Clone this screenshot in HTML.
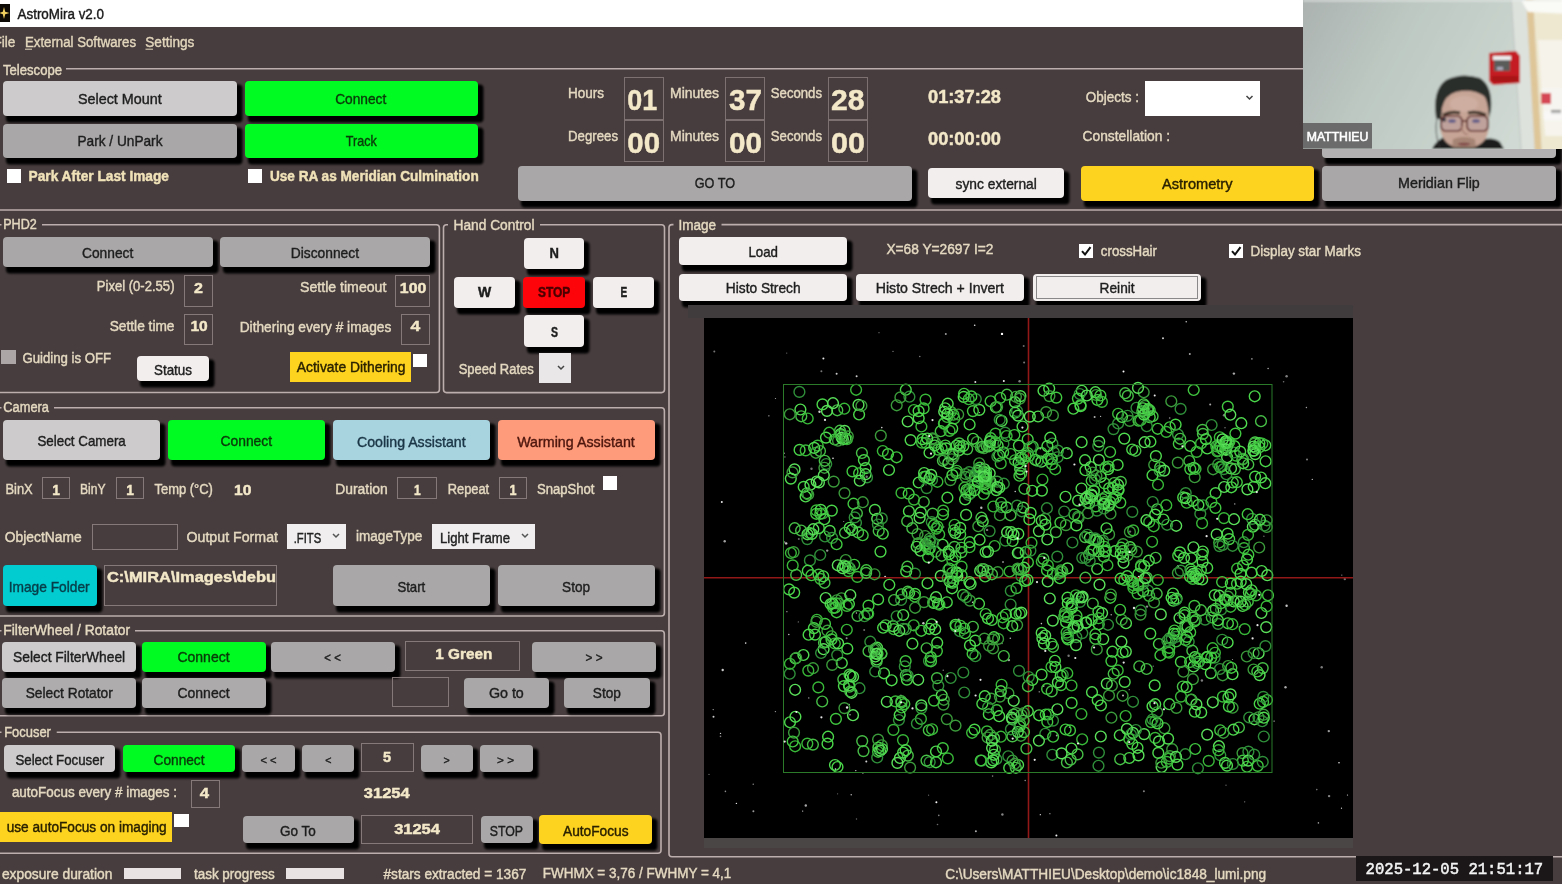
<!DOCTYPE html>
<html><head><meta charset="utf-8"><title>AstroMira v2.0</title>
<style>
html,body{margin:0;padding:0;background:#473d3e;overflow:hidden;}
svg{display:block;font-family:"Liberation Sans",sans-serif;will-change:transform;}
</style></head><body>
<svg width="1562" height="884" viewBox="0 0 1562 884">
<defs>
<filter id="sh" x="-10%" y="-30%" width="120%" height="160%"><feGaussianBlur stdDeviation="1.3"/></filter>
<linearGradient id="wall" gradientUnits="userSpaceOnUse" x1="1303" y1="0" x2="1520" y2="120"><stop offset="0" stop-color="#abb2b0"/><stop offset="0.4" stop-color="#bdc8c2"/><stop offset="0.8" stop-color="#c9d3cd"/><stop offset="1" stop-color="#d0d9d3"/></linearGradient>
<filter id="glow" x="-2%" y="-2%" width="104%" height="104%"><feGaussianBlur stdDeviation="0.45"/></filter>
<filter id="camblur" x="-5%" y="-5%" width="110%" height="110%"><feGaussianBlur stdDeviation="1.0"/></filter>
</defs>
<rect x="0" y="0" width="1562" height="884" fill="#473d3e"/>
<rect x="0" y="0" width="1303" height="27" fill="#ffffff" rx="0" />
<rect x="0" y="4" width="10" height="18" fill="#0d0a05" rx="0" />
<path d="M4,7 L5.2,11.8 L9.5,13 L5.2,14.2 L4,19 L2.8,14.2 L-1,13 L2.8,11.8 Z" fill="#f2d060"/>
<text x="17.50" y="19.30" font-size="14" fill="#1a1a1a" stroke="#1a1a1a" stroke-width="0.4" textLength="86.50" lengthAdjust="spacingAndGlyphs" >AstroMira v2.0</text>
<text x="-6.50" y="47.00" font-size="13.8" fill="#e2d6bc" stroke="#e2d6bc" stroke-width="0.4" textLength="21.90" lengthAdjust="spacingAndGlyphs" >File</text>
<text x="25.00" y="47.00" font-size="13.8" fill="#e2d6bc" stroke="#e2d6bc" stroke-width="0.4" textLength="111.00" lengthAdjust="spacingAndGlyphs" >External Softwares</text>
<text x="145.30" y="47.00" font-size="13.8" fill="#e2d6bc" stroke="#e2d6bc" stroke-width="0.4" textLength="49.10" lengthAdjust="spacingAndGlyphs" >Settings</text>
<line x1="25" y1="49.2" x2="32" y2="49.2" stroke="#e2d6bc" stroke-width="1"/>
<line x1="145.5" y1="49.2" x2="153" y2="49.2" stroke="#e2d6bc" stroke-width="1"/>
<text x="3.00" y="75.00" font-size="13.8" fill="#e4d9c0" stroke="#e4d9c0" stroke-width="0.4" textLength="59.00" lengthAdjust="spacingAndGlyphs" >Telescope</text>
<line x1="66" y1="68.8" x2="1562" y2="68.8" stroke="#bcaeac" stroke-width="1.6"/>
<line x1="-2" y1="210" x2="1562" y2="210" stroke="#bcaeac" stroke-width="1.6"/>
<rect x="6" y="84.5" width="236.5" height="38" rx="4" fill="#000" opacity="1" filter="url(#sh)"/>
<rect x="3" y="81" width="234" height="35" fill="#cdcbcb" rx="4" />
<text x="78.00" y="104.20" font-size="14.5" fill="#1e1e1e" stroke="#1e1e1e" stroke-width="0.4" textLength="83.71" lengthAdjust="spacingAndGlyphs" >Select Mount</text>
<rect x="6" y="127.5" width="236.5" height="37" rx="4" fill="#000" opacity="1" filter="url(#sh)"/>
<rect x="3" y="124" width="234" height="34" fill="#a9a7a7" rx="4" />
<text x="77.50" y="146.30" font-size="14.5" fill="#1e1e1e" stroke="#1e1e1e" stroke-width="0.4" textLength="84.97" lengthAdjust="spacingAndGlyphs" >Park / UnPark</text>
<rect x="248" y="84.5" width="235.5" height="38" rx="4" fill="#000" opacity="1" filter="url(#sh)"/>
<rect x="245" y="81" width="233" height="35" fill="#00fb22" rx="4" />
<text x="335.20" y="103.80" font-size="14.5" fill="#0a3a0a" stroke="#0a3a0a" stroke-width="0.4" textLength="51.09" lengthAdjust="spacingAndGlyphs" >Connect</text>
<rect x="248" y="127.5" width="235.5" height="37" rx="4" fill="#000" opacity="1" filter="url(#sh)"/>
<rect x="245" y="124" width="233" height="34" fill="#00fb22" rx="4" />
<text x="345.80" y="145.80" font-size="14.5" fill="#0a3a0a" stroke="#0a3a0a" stroke-width="0.4" textLength="30.87" lengthAdjust="spacingAndGlyphs" >Track</text>
<rect x="7" y="169" width="14" height="14" fill="#ffffff" rx="0" />
<text x="28.60" y="181.30" font-size="14.5" font-weight="bold" fill="#f0e2b8" stroke="#f0e2b8" stroke-width="0.45" textLength="140.40" lengthAdjust="spacingAndGlyphs" >Park After Last Image</text>
<rect x="248" y="169" width="14" height="14" fill="#ffffff" rx="0" />
<text x="270.00" y="181.30" font-size="14.5" font-weight="bold" fill="#f0e2b8" stroke="#f0e2b8" stroke-width="0.45" textLength="208.69" lengthAdjust="spacingAndGlyphs" >Use RA as Meridian Culmination</text>
<text x="568.00" y="98.30" font-size="14.5" fill="#e4d9c0" stroke="#e4d9c0" stroke-width="0.4" textLength="35.99" lengthAdjust="spacingAndGlyphs" >Hours</text>
<text x="568.00" y="140.80" font-size="14.5" fill="#e4d9c0" stroke="#e4d9c0" stroke-width="0.4" textLength="50.00" lengthAdjust="spacingAndGlyphs" >Degrees</text>
<text x="670.00" y="98.30" font-size="14.5" fill="#e4d9c0" stroke="#e4d9c0" stroke-width="0.4" textLength="49.01" lengthAdjust="spacingAndGlyphs" >Minutes</text>
<text x="670.00" y="140.80" font-size="14.5" fill="#e4d9c0" stroke="#e4d9c0" stroke-width="0.4" textLength="49.01" lengthAdjust="spacingAndGlyphs" >Minutes</text>
<text x="770.80" y="98.30" font-size="14.5" fill="#e4d9c0" stroke="#e4d9c0" stroke-width="0.4" textLength="51.20" lengthAdjust="spacingAndGlyphs" >Seconds</text>
<text x="770.80" y="140.80" font-size="14.5" fill="#e4d9c0" stroke="#e4d9c0" stroke-width="0.4" textLength="51.20" lengthAdjust="spacingAndGlyphs" >Seconds</text>
<rect x="624.5" y="77.5" width="39" height="42" fill="none" stroke="#7d7172" stroke-width="1"/>
<rect x="624.5" y="120.5" width="39" height="41" fill="none" stroke="#7d7172" stroke-width="1"/>
<rect x="725.5" y="77.5" width="39" height="42" fill="none" stroke="#7d7172" stroke-width="1"/>
<rect x="725.5" y="120.5" width="39" height="41" fill="none" stroke="#7d7172" stroke-width="1"/>
<rect x="828.5" y="77.5" width="39" height="42" fill="none" stroke="#7d7172" stroke-width="1"/>
<rect x="828.5" y="120.5" width="39" height="41" fill="none" stroke="#7d7172" stroke-width="1"/>
<text x="627.30" y="109.70" font-size="30" font-weight="bold" fill="#f3e8c8" stroke="#f3e8c8" stroke-width="0.45" textLength="29.91" lengthAdjust="spacingAndGlyphs" >01</text>
<text x="627.30" y="152.50" font-size="30" font-weight="bold" fill="#f3e8c8" stroke="#f3e8c8" stroke-width="0.45" textLength="32.71" lengthAdjust="spacingAndGlyphs" >00</text>
<text x="729.00" y="109.70" font-size="30" font-weight="bold" fill="#f3e8c8" stroke="#f3e8c8" stroke-width="0.45" textLength="33.01" lengthAdjust="spacingAndGlyphs" >37</text>
<text x="729.00" y="152.50" font-size="30" font-weight="bold" fill="#f3e8c8" stroke="#f3e8c8" stroke-width="0.45" textLength="33.01" lengthAdjust="spacingAndGlyphs" >00</text>
<text x="831.00" y="109.70" font-size="30" font-weight="bold" fill="#f3e8c8" stroke="#f3e8c8" stroke-width="0.45" textLength="33.51" lengthAdjust="spacingAndGlyphs" >28</text>
<text x="831.00" y="152.50" font-size="30" font-weight="bold" fill="#f3e8c8" stroke="#f3e8c8" stroke-width="0.45" textLength="34.01" lengthAdjust="spacingAndGlyphs" >00</text>
<text x="928.00" y="102.50" font-size="18" font-weight="bold" fill="#f3e8c8" stroke="#f3e8c8" stroke-width="0.45" textLength="73.00" lengthAdjust="spacingAndGlyphs" >01:37:28</text>
<text x="928.00" y="145.30" font-size="18" font-weight="bold" fill="#f3e8c8" stroke="#f3e8c8" stroke-width="0.45" textLength="73.00" lengthAdjust="spacingAndGlyphs" >00:00:00</text>
<text x="1085.80" y="101.70" font-size="14.5" fill="#e4d9c0" stroke="#e4d9c0" stroke-width="0.4" textLength="53.20" lengthAdjust="spacingAndGlyphs" >Objects :</text>
<text x="1082.50" y="140.80" font-size="14.5" fill="#e4d9c0" stroke="#e4d9c0" stroke-width="0.4" textLength="87.50" lengthAdjust="spacingAndGlyphs" >Constellation :</text>
<rect x="1145" y="81" width="115" height="35" fill="#ffffff" rx="0" />
<path d="M1246.5,96.0 L1249.5,99.0 L1252.5,96.0" fill="none" stroke="#444" stroke-width="1.5"/>
<rect x="521" y="169.5" width="396.5" height="38" rx="4" fill="#000" opacity="1" filter="url(#sh)"/>
<rect x="518" y="166" width="394" height="35" fill="#a9a7a7" rx="4" />
<text x="694.70" y="188.00" font-size="14.5" fill="#1e1e1e" stroke="#1e1e1e" stroke-width="0.4" textLength="40.30" lengthAdjust="spacingAndGlyphs" >GO TO</text>
<rect x="931" y="171.5" width="138.5" height="33" rx="4" fill="#000" opacity="1" filter="url(#sh)"/>
<rect x="928" y="168" width="136" height="30" fill="#f2eeed" rx="4" />
<text x="955.60" y="188.50" font-size="14.5" fill="#1e1e1e" stroke="#1e1e1e" stroke-width="0.4" textLength="81.19" lengthAdjust="spacingAndGlyphs" >sync external</text>
<rect x="1084" y="169.5" width="235.5" height="38" rx="4" fill="#000" opacity="1" filter="url(#sh)"/>
<rect x="1081" y="166" width="233" height="35" fill="#fdd31f" rx="4" />
<text x="1162.00" y="188.50" font-size="14.5" fill="#2a2100" stroke="#2a2100" stroke-width="0.4" textLength="70.50" lengthAdjust="spacingAndGlyphs" >Astrometry</text>
<rect x="1325" y="169.5" width="236.5" height="38" rx="4" fill="#000" opacity="1" filter="url(#sh)"/>
<rect x="1322" y="166" width="234" height="35" fill="#a9a7a7" rx="4" />
<text x="1398.10" y="188.30" font-size="14.5" fill="#1e1e1e" stroke="#1e1e1e" stroke-width="0.4" textLength="81.70" lengthAdjust="spacingAndGlyphs" >Meridian Flip</text>
<rect x="1325" y="127.5" width="236.5" height="37" rx="4" fill="#000" opacity="1" filter="url(#sh)"/>
<rect x="1322" y="124" width="234" height="34" fill="#b3b1b1" rx="4" />
<text x="3.20" y="229.40" font-size="13.8" fill="#e4d9c0" stroke="#e4d9c0" stroke-width="0.4" textLength="33.59" lengthAdjust="spacingAndGlyphs" >PHD2</text>
<path d="M42,224.7 H436.4 Q439.4,224.7 439.4,227.7 V389.5 Q439.4,392.5 436.4,392.5 H0 Q-3,392.5 -3,389.5 V227.7 Q-3,224.7 0,224.7 H1.5" fill="none" stroke="#bcaeac" stroke-width="1.6"/>
<rect x="6" y="240.5" width="212.5" height="33" rx="4" fill="#000" opacity="1" filter="url(#sh)"/>
<rect x="3" y="237" width="210" height="30" fill="#a9a7a7" rx="4" />
<text x="82.00" y="258.30" font-size="14.5" fill="#1e1e1e" stroke="#1e1e1e" stroke-width="0.4" textLength="51.29" lengthAdjust="spacingAndGlyphs" >Connect</text>
<rect x="223" y="240.5" width="212.5" height="33" rx="4" fill="#000" opacity="1" filter="url(#sh)"/>
<rect x="220" y="237" width="210" height="30" fill="#a9a7a7" rx="4" />
<text x="290.70" y="258.40" font-size="14.5" fill="#1e1e1e" stroke="#1e1e1e" stroke-width="0.4" textLength="68.30" lengthAdjust="spacingAndGlyphs" >Disconnect</text>
<text x="96.80" y="291.40" font-size="14" fill="#e4d9c0" stroke="#e4d9c0" stroke-width="0.4" textLength="77.70" lengthAdjust="spacingAndGlyphs" >Pixel (0-2.55)</text>
<rect x="184.5" y="275.5" width="28" height="31" fill="none" stroke="#85797a" stroke-width="1"/>
<text x="194.10" y="292.50" font-size="15.5" font-weight="bold" fill="#f3e8c8" stroke="#f3e8c8" stroke-width="0.45" textLength="8.90" lengthAdjust="spacingAndGlyphs" >2</text>
<text x="300.00" y="291.90" font-size="14" fill="#e4d9c0" stroke="#e4d9c0" stroke-width="0.4" textLength="86.40" lengthAdjust="spacingAndGlyphs" >Settle timeout</text>
<rect x="395.5" y="275.5" width="34" height="31" fill="none" stroke="#85797a" stroke-width="1"/>
<text x="399.80" y="293.00" font-size="15.5" font-weight="bold" fill="#f3e8c8" stroke="#f3e8c8" stroke-width="0.45" textLength="26.51" lengthAdjust="spacingAndGlyphs" >100</text>
<text x="109.70" y="331.20" font-size="14" fill="#e4d9c0" stroke="#e4d9c0" stroke-width="0.4" textLength="64.80" lengthAdjust="spacingAndGlyphs" >Settle time</text>
<rect x="184.5" y="314.5" width="28" height="30" fill="none" stroke="#85797a" stroke-width="1"/>
<text x="190.40" y="331.20" font-size="15.5" font-weight="bold" fill="#f3e8c8" stroke="#f3e8c8" stroke-width="0.45" textLength="17.30" lengthAdjust="spacingAndGlyphs" >10</text>
<text x="239.70" y="331.50" font-size="14" fill="#e4d9c0" stroke="#e4d9c0" stroke-width="0.4" textLength="151.59" lengthAdjust="spacingAndGlyphs" >Dithering every # images</text>
<rect x="401.5" y="314.5" width="28" height="30" fill="none" stroke="#85797a" stroke-width="1"/>
<text x="410.50" y="331.20" font-size="15.5" font-weight="bold" fill="#f3e8c8" stroke="#f3e8c8" stroke-width="0.45" textLength="9.70" lengthAdjust="spacingAndGlyphs" >4</text>
<rect x="1" y="350" width="15" height="14" fill="#aca6a6" rx="0" />
<text x="22.40" y="362.60" font-size="14" fill="#e4d9c0" stroke="#e4d9c0" stroke-width="0.4" textLength="88.80" lengthAdjust="spacingAndGlyphs" >Guiding is OFF</text>
<rect x="140" y="359.5" width="74.5" height="28" rx="4" fill="#000" opacity="1" filter="url(#sh)"/>
<rect x="137" y="356" width="72" height="25" fill="#f2eeed" rx="4" />
<text x="154.00" y="374.80" font-size="14.5" fill="#1e1e1e" stroke="#1e1e1e" stroke-width="0.4" textLength="38.00" lengthAdjust="spacingAndGlyphs" >Status</text>
<rect x="290" y="352" width="121" height="30" fill="#fdd31f" rx="0" />
<text x="296.80" y="372.20" font-size="14" fill="#2a2100" stroke="#2a2100" stroke-width="0.4" textLength="108.70" lengthAdjust="spacingAndGlyphs" >Activate Dithering</text>
<rect x="413" y="354" width="14" height="13" fill="#ffffff" rx="0" />
<text x="453.50" y="229.70" font-size="13.8" fill="#e4d9c0" stroke="#e4d9c0" stroke-width="0.4" textLength="81.00" lengthAdjust="spacingAndGlyphs" >Hand Control</text>
<path d="M540,224.8 H661.5 Q664.5,224.8 664.5,227.8 V389.6 Q664.5,392.6 661.5,392.6 H446.5 Q443.5,392.6 443.5,389.6 V227.8 Q443.5,224.8 446.5,224.8 H448.0" fill="none" stroke="#bcaeac" stroke-width="1.6"/>
<rect x="527" y="241.5" width="62.5" height="34" rx="4" fill="#000" opacity="1" filter="url(#sh)"/>
<rect x="524" y="238" width="60" height="31" fill="#f2eeed" rx="4" />
<text x="549.40" y="258.40" font-size="14.5" font-weight="bold" fill="#1e1e1e" stroke="#1e1e1e" stroke-width="0.45" textLength="9.40" lengthAdjust="spacingAndGlyphs" >N</text>
<rect x="457" y="280.5" width="63.5" height="34" rx="4" fill="#000" opacity="1" filter="url(#sh)"/>
<rect x="454" y="277" width="61" height="31" fill="#f2eeed" rx="4" />
<text x="478.00" y="297.30" font-size="14.5" font-weight="bold" fill="#1e1e1e" stroke="#1e1e1e" stroke-width="0.45" textLength="13.20" lengthAdjust="spacingAndGlyphs" >W</text>
<rect x="526" y="280.5" width="64.5" height="34" rx="4" fill="#000" opacity="1" filter="url(#sh)"/>
<rect x="523" y="277" width="62" height="31" fill="#fc040a" rx="4" />
<text x="537.90" y="297.30" font-size="14.5" font-weight="bold" fill="#4a0000" stroke="#4a0000" stroke-width="0.45" textLength="32.40" lengthAdjust="spacingAndGlyphs" >STOP</text>
<rect x="596" y="280.5" width="63.5" height="34" rx="4" fill="#000" opacity="1" filter="url(#sh)"/>
<rect x="593" y="277" width="61" height="31" fill="#f2eeed" rx="4" />
<text x="620.50" y="297.30" font-size="14.5" font-weight="bold" fill="#1e1e1e" stroke="#1e1e1e" stroke-width="0.45" textLength="6.70" lengthAdjust="spacingAndGlyphs" >E</text>
<rect x="527" y="318.5" width="62.5" height="35" rx="4" fill="#000" opacity="1" filter="url(#sh)"/>
<rect x="524" y="315" width="60" height="32" fill="#f2eeed" rx="4" />
<text x="551.00" y="336.90" font-size="14.5" font-weight="bold" fill="#1e1e1e" stroke="#1e1e1e" stroke-width="0.45" textLength="7.00" lengthAdjust="spacingAndGlyphs" >S</text>
<text x="458.70" y="374.00" font-size="14" fill="#e4d9c0" stroke="#e4d9c0" stroke-width="0.4" textLength="75.00" lengthAdjust="spacingAndGlyphs" >Speed Rates</text>
<rect x="539" y="353" width="32" height="30" fill="#e9e7e7" rx="0" />
<path d="M558,366.0 L561,369.0 L564,366.0" fill="none" stroke="#444" stroke-width="1.5"/>
<text x="678.40" y="229.60" font-size="13.8" fill="#e4d9c0" stroke="#e4d9c0" stroke-width="0.4" textLength="37.60" lengthAdjust="spacingAndGlyphs" >Image</text>
<path d="M721.5,224.6 H1597 Q1600,224.6 1600,227.6 V853.8 Q1600,856.8 1597,856.8 H672 Q669,856.8 669,853.8 V227.6 Q669,224.6 672,224.6 H673.5" fill="none" stroke="#bcaeac" stroke-width="1.6"/>
<rect x="682" y="240.5" width="170.5" height="31" rx="4" fill="#000" opacity="1" filter="url(#sh)"/>
<rect x="679" y="237" width="168" height="28" fill="#f2eeed" rx="4" />
<text x="748.40" y="256.80" font-size="14.5" fill="#1e1e1e" stroke="#1e1e1e" stroke-width="0.4" textLength="29.60" lengthAdjust="spacingAndGlyphs" >Load</text>
<rect x="682" y="277.5" width="170.5" height="30" rx="4" fill="#000" opacity="1" filter="url(#sh)"/>
<rect x="679" y="274" width="168" height="27" fill="#f2eeed" rx="4" />
<text x="725.80" y="293.40" font-size="14.5" fill="#1e1e1e" stroke="#1e1e1e" stroke-width="0.4" textLength="74.80" lengthAdjust="spacingAndGlyphs" >Histo Strech</text>
<rect x="859" y="277.5" width="170.5" height="30" rx="4" fill="#000" opacity="1" filter="url(#sh)"/>
<rect x="856" y="274" width="168" height="27" fill="#f2eeed" rx="4" />
<text x="875.80" y="293.40" font-size="14.5" fill="#1e1e1e" stroke="#1e1e1e" stroke-width="0.4" textLength="128.20" lengthAdjust="spacingAndGlyphs" >Histo Strech + Invert</text>
<rect x="1036" y="277.5" width="170.5" height="30" rx="4" fill="#000" opacity="1" filter="url(#sh)"/>
<rect x="1033" y="274" width="168" height="27" fill="#f2eeed" rx="4" />
<text x="1099.60" y="293.40" font-size="14.5" fill="#1e1e1e" stroke="#1e1e1e" stroke-width="0.4" textLength="35.00" lengthAdjust="spacingAndGlyphs" >Reinit</text>
<rect x="1036.5" y="276.5" width="161" height="22" fill="none" stroke="#222" stroke-width="1" stroke-dasharray="1,1"/>
<text x="886.40" y="253.70" font-size="14" fill="#e4d9c0" stroke="#e4d9c0" stroke-width="0.4" textLength="107.01" lengthAdjust="spacingAndGlyphs" >X=68 Y=2697 I=2</text>
<rect x="1079" y="244" width="14" height="14" fill="#ffffff" rx="0" />
<path d="M1082,251.2 L1085,254.5 L1090.5,247.2" fill="none" stroke="#111" stroke-width="2"/>
<text x="1100.80" y="255.80" font-size="14" fill="#e4d9c0" stroke="#e4d9c0" stroke-width="0.4" textLength="56.20" lengthAdjust="spacingAndGlyphs" >crossHair</text>
<rect x="1229" y="244" width="14" height="14" fill="#ffffff" rx="0" />
<path d="M1232,251.2 L1235,254.5 L1240.5,247.2" fill="none" stroke="#111" stroke-width="2"/>
<text x="1250.60" y="255.60" font-size="14" fill="#e4d9c0" stroke="#e4d9c0" stroke-width="0.4" textLength="110.40" lengthAdjust="spacingAndGlyphs" >Display star Marks</text>
<rect x="688" y="305" width="665" height="13" fill="#403b3c" rx="0" />
<rect x="704" y="318" width="649" height="520" fill="#000000" rx="0" />
<rect x="704" y="838" width="649" height="10" fill="#4a4646" rx="0" />
<text x="3.30" y="412.00" font-size="13.8" fill="#e4d9c0" stroke="#e4d9c0" stroke-width="0.4" textLength="45.68" lengthAdjust="spacingAndGlyphs" >Camera</text>
<path d="M54,407.7 H661.4 Q664.4,407.7 664.4,410.7 V613 Q664.4,616 661.4,616 H0 Q-3,616 -3,613 V410.7 Q-3,407.7 0,407.7 H1.5" fill="none" stroke="#bcaeac" stroke-width="1.6"/>
<rect x="6" y="423.5" width="159.5" height="43" rx="4" fill="#000" opacity="1" filter="url(#sh)"/>
<rect x="3" y="420" width="157" height="40" fill="#cdcbcb" rx="4" />
<text x="37.40" y="446.20" font-size="14.5" fill="#1e1e1e" stroke="#1e1e1e" stroke-width="0.4" textLength="88.38" lengthAdjust="spacingAndGlyphs" >Select Camera</text>
<rect x="171" y="423.5" width="159.5" height="43" rx="4" fill="#000" opacity="1" filter="url(#sh)"/>
<rect x="168" y="420" width="157" height="40" fill="#00fb22" rx="4" />
<text x="220.50" y="446.20" font-size="14.5" fill="#0a3a0a" stroke="#0a3a0a" stroke-width="0.4" textLength="51.59" lengthAdjust="spacingAndGlyphs" >Connect</text>
<rect x="336" y="423.5" width="159.5" height="43" rx="4" fill="#000" opacity="1" filter="url(#sh)"/>
<rect x="333" y="420" width="157" height="40" fill="#a8d4e0" rx="4" />
<text x="357.00" y="446.50" font-size="14.5" fill="#1b3646" stroke="#1b3646" stroke-width="0.4" textLength="108.60" lengthAdjust="spacingAndGlyphs" >Cooling Assistant</text>
<rect x="501" y="423.5" width="159.5" height="43" rx="4" fill="#000" opacity="1" filter="url(#sh)"/>
<rect x="498" y="420" width="157" height="40" fill="#fe9b7b" rx="4" />
<text x="517.20" y="446.50" font-size="14.5" fill="#4e170e" stroke="#4e170e" stroke-width="0.4" textLength="117.60" lengthAdjust="spacingAndGlyphs" >Warming Assistant</text>
<text x="5.40" y="494.00" font-size="14" fill="#e4d9c0" stroke="#e4d9c0" stroke-width="0.4" textLength="27.30" lengthAdjust="spacingAndGlyphs" >BinX</text>
<rect x="42.5" y="477.5" width="27" height="21" fill="none" stroke="#85797a" stroke-width="1"/>
<text x="52.20" y="494.70" font-size="15" font-weight="bold" fill="#f3e8c8" stroke="#f3e8c8" stroke-width="0.45" textLength="7.70" lengthAdjust="spacingAndGlyphs" >1</text>
<text x="80.00" y="494.00" font-size="14" fill="#e4d9c0" stroke="#e4d9c0" stroke-width="0.4" textLength="25.60" lengthAdjust="spacingAndGlyphs" >BinY</text>
<rect x="116.5" y="477.5" width="27" height="21" fill="none" stroke="#85797a" stroke-width="1"/>
<text x="126.20" y="494.70" font-size="15" font-weight="bold" fill="#f3e8c8" stroke="#f3e8c8" stroke-width="0.45" textLength="7.70" lengthAdjust="spacingAndGlyphs" >1</text>
<text x="154.50" y="494.00" font-size="14" fill="#e4d9c0" stroke="#e4d9c0" stroke-width="0.4" textLength="58.40" lengthAdjust="spacingAndGlyphs" >Temp (°C)</text>
<text x="234.00" y="494.70" font-size="15" font-weight="bold" fill="#f3e8c8" stroke="#f3e8c8" stroke-width="0.45" textLength="17.40" lengthAdjust="spacingAndGlyphs" >10</text>
<text x="335.20" y="493.60" font-size="14" fill="#e4d9c0" stroke="#e4d9c0" stroke-width="0.4" textLength="52.50" lengthAdjust="spacingAndGlyphs" >Duration</text>
<rect x="397.5" y="477.5" width="39" height="21" fill="none" stroke="#85797a" stroke-width="1"/>
<text x="414.10" y="494.70" font-size="15" font-weight="bold" fill="#f3e8c8" stroke="#f3e8c8" stroke-width="0.45" textLength="6.70" lengthAdjust="spacingAndGlyphs" >1</text>
<text x="447.70" y="493.60" font-size="14" fill="#e4d9c0" stroke="#e4d9c0" stroke-width="0.4" textLength="41.50" lengthAdjust="spacingAndGlyphs" >Repeat</text>
<rect x="499.5" y="477.5" width="27" height="21" fill="none" stroke="#85797a" stroke-width="1"/>
<text x="509.50" y="494.70" font-size="15" font-weight="bold" fill="#f3e8c8" stroke="#f3e8c8" stroke-width="0.45" textLength="7.00" lengthAdjust="spacingAndGlyphs" >1</text>
<text x="536.90" y="493.60" font-size="14" fill="#e4d9c0" stroke="#e4d9c0" stroke-width="0.4" textLength="57.59" lengthAdjust="spacingAndGlyphs" >SnapShot</text>
<rect x="603" y="476" width="14" height="14" fill="#ffffff" rx="0" />
<text x="4.80" y="541.60" font-size="14" fill="#e4d9c0" stroke="#e4d9c0" stroke-width="0.4" textLength="76.80" lengthAdjust="spacingAndGlyphs" >ObjectName</text>
<rect x="92.5" y="524.5" width="85" height="25" fill="none" stroke="#85797a" stroke-width="1"/>
<text x="186.50" y="541.60" font-size="14" fill="#e4d9c0" stroke="#e4d9c0" stroke-width="0.4" textLength="91.50" lengthAdjust="spacingAndGlyphs" >Output Format</text>
<rect x="287" y="524" width="59" height="25" fill="#f0eeee" rx="0" />
<text x="293.70" y="542.50" font-size="14" fill="#222" stroke="#222" stroke-width="0.4" textLength="27.50" lengthAdjust="spacingAndGlyphs" >.FITS</text>
<path d="M333,534.0 L336,537.0 L339,534.0" fill="none" stroke="#555" stroke-width="1.5"/>
<text x="356.00" y="541.20" font-size="14" fill="#e4d9c0" stroke="#e4d9c0" stroke-width="0.4" textLength="66.30" lengthAdjust="spacingAndGlyphs" >imageType</text>
<rect x="432" y="524" width="103" height="25" fill="#f0eeee" rx="0" />
<text x="440.00" y="542.50" font-size="14" fill="#222" stroke="#222" stroke-width="0.4" textLength="70.01" lengthAdjust="spacingAndGlyphs" >Light Frame</text>
<path d="M522,534.0 L525,537.0 L528,534.0" fill="none" stroke="#555" stroke-width="1.5"/>
<rect x="6" y="568.5" width="96.5" height="44" rx="4" fill="#000" opacity="1" filter="url(#sh)"/>
<rect x="3" y="565" width="94" height="41" fill="#02cccf" rx="4" />
<text x="8.70" y="591.60" font-size="14.5" fill="#073d49" stroke="#073d49" stroke-width="0.4" textLength="81.00" lengthAdjust="spacingAndGlyphs" >Image Folder</text>
<rect x="104.5" y="565.5" width="172" height="40" fill="none" stroke="#85797a" stroke-width="1"/>
<text x="107.00" y="582.00" font-size="15" font-weight="bold" fill="#f3e8c8" stroke="#f3e8c8" stroke-width="0.45" textLength="169.00" lengthAdjust="spacingAndGlyphs" >C:\MIRA\Images\debu</text>
<rect x="336" y="568.5" width="159.5" height="44" rx="4" fill="#000" opacity="1" filter="url(#sh)"/>
<rect x="333" y="565" width="157" height="41" fill="#a9a7a7" rx="4" />
<text x="397.40" y="591.90" font-size="14.5" fill="#1e1e1e" stroke="#1e1e1e" stroke-width="0.4" textLength="27.90" lengthAdjust="spacingAndGlyphs" >Start</text>
<rect x="501" y="568.5" width="159.5" height="44" rx="4" fill="#000" opacity="1" filter="url(#sh)"/>
<rect x="498" y="565" width="157" height="41" fill="#a9a7a7" rx="4" />
<text x="562.10" y="591.90" font-size="14.5" fill="#1e1e1e" stroke="#1e1e1e" stroke-width="0.4" textLength="28.00" lengthAdjust="spacingAndGlyphs" >Stop</text>
<text x="3.30" y="635.00" font-size="13.8" fill="#e4d9c0" stroke="#e4d9c0" stroke-width="0.4" textLength="126.71" lengthAdjust="spacingAndGlyphs" >FilterWheel / Rotator</text>
<path d="M135,630.7 H661.3 Q664.3,630.7 664.3,633.7 V712.8 Q664.3,715.8 661.3,715.8 H0 Q-3,715.8 -3,712.8 V633.7 Q-3,630.7 0,630.7 H1.5" fill="none" stroke="#bcaeac" stroke-width="1.6"/>
<rect x="5" y="645.5" width="136.5" height="33" rx="4" fill="#000" opacity="1" filter="url(#sh)"/>
<rect x="2" y="642" width="134" height="30" fill="#cdcbcb" rx="4" />
<text x="13.10" y="661.80" font-size="14.5" fill="#1e1e1e" stroke="#1e1e1e" stroke-width="0.4" textLength="112.10" lengthAdjust="spacingAndGlyphs" >Select FilterWheel</text>
<rect x="145" y="645.5" width="126.5" height="33" rx="4" fill="#000" opacity="1" filter="url(#sh)"/>
<rect x="142" y="642" width="124" height="30" fill="#00fb22" rx="4" />
<text x="177.40" y="661.80" font-size="14.5" fill="#0a3a0a" stroke="#0a3a0a" stroke-width="0.4" textLength="52.19" lengthAdjust="spacingAndGlyphs" >Connect</text>
<rect x="274" y="645.5" width="126.5" height="33" rx="4" fill="#000" opacity="1" filter="url(#sh)"/>
<rect x="271" y="642" width="124" height="30" fill="#a9a7a7" rx="4" />
<text x="324.30" y="661.50" font-size="12" fill="#1e1e1e" stroke="#1e1e1e" stroke-width="0.4" textLength="16.50" lengthAdjust="spacingAndGlyphs" >&lt; &lt;</text>
<rect x="405.5" y="641.5" width="114" height="29" fill="none" stroke="#85797a" stroke-width="1"/>
<text x="435.30" y="659.10" font-size="15.5" font-weight="bold" fill="#f3e8c8" stroke="#f3e8c8" stroke-width="0.45" textLength="57.00" lengthAdjust="spacingAndGlyphs" >1 Green</text>
<rect x="535" y="645.5" width="126.5" height="33" rx="4" fill="#000" opacity="1" filter="url(#sh)"/>
<rect x="532" y="642" width="124" height="30" fill="#a9a7a7" rx="4" />
<text x="585.50" y="661.50" font-size="12" fill="#1e1e1e" stroke="#1e1e1e" stroke-width="0.4" textLength="17.00" lengthAdjust="spacingAndGlyphs" >&gt; &gt;</text>
<rect x="5" y="681.5" width="136.5" height="33" rx="4" fill="#000" opacity="1" filter="url(#sh)"/>
<rect x="2" y="678" width="134" height="30" fill="#aeacac" rx="4" />
<text x="25.70" y="697.70" font-size="14.5" fill="#1e1e1e" stroke="#1e1e1e" stroke-width="0.4" textLength="87.11" lengthAdjust="spacingAndGlyphs" >Select Rotator</text>
<rect x="145" y="681.5" width="126.5" height="33" rx="4" fill="#000" opacity="1" filter="url(#sh)"/>
<rect x="142" y="678" width="124" height="30" fill="#acaaaa" rx="4" />
<text x="177.40" y="697.70" font-size="14.5" fill="#1e1e1e" stroke="#1e1e1e" stroke-width="0.4" textLength="52.19" lengthAdjust="spacingAndGlyphs" >Connect</text>
<rect x="392.5" y="677.5" width="56" height="29" fill="none" stroke="#85797a" stroke-width="1"/>
<rect x="467" y="681.5" width="87.5" height="33" rx="4" fill="#000" opacity="1" filter="url(#sh)"/>
<rect x="464" y="678" width="85" height="30" fill="#a9a7a7" rx="4" />
<text x="488.90" y="697.70" font-size="14.5" fill="#1e1e1e" stroke="#1e1e1e" stroke-width="0.4" textLength="34.90" lengthAdjust="spacingAndGlyphs" >Go to</text>
<rect x="567" y="681.5" width="88.5" height="33" rx="4" fill="#000" opacity="1" filter="url(#sh)"/>
<rect x="564" y="678" width="86" height="30" fill="#a9a7a7" rx="4" />
<text x="592.80" y="697.70" font-size="14.5" fill="#1e1e1e" stroke="#1e1e1e" stroke-width="0.4" textLength="28.10" lengthAdjust="spacingAndGlyphs" >Stop</text>
<text x="4.20" y="736.50" font-size="13.8" fill="#e4d9c0" stroke="#e4d9c0" stroke-width="0.4" textLength="46.70" lengthAdjust="spacingAndGlyphs" >Focuser</text>
<path d="M56.7,732.3 H658 Q661,732.3 661,735.3 V850.3 Q661,853.3 658,853.3 H0 Q-3,853.3 -3,850.3 V735.3 Q-3,732.3 0,732.3 H1.5" fill="none" stroke="#bcaeac" stroke-width="1.6"/>
<rect x="7" y="748.5" width="113.5" height="30" rx="4" fill="#000" opacity="1" filter="url(#sh)"/>
<rect x="4" y="745" width="111" height="27" fill="#cdcbcb" rx="4" />
<text x="15.40" y="765.00" font-size="14.5" fill="#1e1e1e" stroke="#1e1e1e" stroke-width="0.4" textLength="88.71" lengthAdjust="spacingAndGlyphs" >Select Focuser</text>
<rect x="126" y="748.5" width="114.5" height="30" rx="4" fill="#000" opacity="1" filter="url(#sh)"/>
<rect x="123" y="745" width="112" height="27" fill="#00fb22" rx="4" />
<text x="153.60" y="765.00" font-size="14.5" fill="#0a3a0a" stroke="#0a3a0a" stroke-width="0.4" textLength="50.89" lengthAdjust="spacingAndGlyphs" >Connect</text>
<rect x="245" y="748.5" width="55.5" height="30" rx="4" fill="#000" opacity="1" filter="url(#sh)"/>
<rect x="242" y="745" width="53" height="27" fill="#a9a7a7" rx="4" />
<text x="260.40" y="763.50" font-size="11" fill="#1e1e1e" stroke="#1e1e1e" stroke-width="0.4" textLength="16.10" lengthAdjust="spacingAndGlyphs" >&lt; &lt;</text>
<rect x="305" y="748.5" width="54.5" height="30" rx="4" fill="#000" opacity="1" filter="url(#sh)"/>
<rect x="302" y="745" width="52" height="27" fill="#a9a7a7" rx="4" />
<text x="325.20" y="763.50" font-size="11" fill="#1e1e1e" stroke="#1e1e1e" stroke-width="0.4" textLength="6.20" lengthAdjust="spacingAndGlyphs" >&lt;</text>
<rect x="361.5" y="743.5" width="52" height="28" fill="none" stroke="#85797a" stroke-width="1"/>
<text x="383.00" y="761.80" font-size="15" font-weight="bold" fill="#f3e8c8" stroke="#f3e8c8" stroke-width="0.45" textLength="8.10" lengthAdjust="spacingAndGlyphs" >5</text>
<rect x="424" y="748.5" width="54.5" height="30" rx="4" fill="#000" opacity="1" filter="url(#sh)"/>
<rect x="421" y="745" width="52" height="27" fill="#a9a7a7" rx="4" />
<text x="443.50" y="763.50" font-size="11" fill="#1e1e1e" stroke="#1e1e1e" stroke-width="0.4" textLength="6.20" lengthAdjust="spacingAndGlyphs" >&gt;</text>
<rect x="483" y="748.5" width="55.5" height="30" rx="4" fill="#000" opacity="1" filter="url(#sh)"/>
<rect x="480" y="745" width="53" height="27" fill="#a9a7a7" rx="4" />
<text x="497.00" y="763.50" font-size="11" fill="#1e1e1e" stroke="#1e1e1e" stroke-width="0.4" textLength="17.00" lengthAdjust="spacingAndGlyphs" >&gt; &gt;</text>
<text x="11.90" y="796.60" font-size="14" fill="#e4d9c0" stroke="#e4d9c0" stroke-width="0.4" textLength="165.10" lengthAdjust="spacingAndGlyphs" >autoFocus every # images :</text>
<rect x="191.5" y="780.5" width="28" height="27" fill="none" stroke="#85797a" stroke-width="1"/>
<text x="199.70" y="797.60" font-size="15" font-weight="bold" fill="#f3e8c8" stroke="#f3e8c8" stroke-width="0.45" textLength="9.30" lengthAdjust="spacingAndGlyphs" >4</text>
<text x="363.80" y="798.40" font-size="15" font-weight="bold" fill="#f3e8c8" stroke="#f3e8c8" stroke-width="0.45" textLength="45.90" lengthAdjust="spacingAndGlyphs" >31254</text>
<rect x="0" y="812" width="172" height="30" fill="#fdd31f" rx="0" />
<text x="6.70" y="831.80" font-size="14" fill="#2a2100" stroke="#2a2100" stroke-width="0.4" textLength="159.99" lengthAdjust="spacingAndGlyphs" >use autoFocus on imaging</text>
<rect x="174" y="814" width="15" height="13" fill="#ffffff" rx="0" />
<rect x="246" y="819.5" width="113.5" height="30" rx="4" fill="#000" opacity="1" filter="url(#sh)"/>
<rect x="243" y="816" width="111" height="27" fill="#a9a7a7" rx="4" />
<text x="280.10" y="835.80" font-size="14.5" fill="#1e1e1e" stroke="#1e1e1e" stroke-width="0.4" textLength="35.80" lengthAdjust="spacingAndGlyphs" >Go To</text>
<rect x="361.5" y="815.5" width="111" height="28" fill="none" stroke="#85797a" stroke-width="1"/>
<text x="394.20" y="833.60" font-size="15" font-weight="bold" fill="#f3e8c8" stroke="#f3e8c8" stroke-width="0.45" textLength="45.70" lengthAdjust="spacingAndGlyphs" >31254</text>
<rect x="484" y="819.5" width="54.5" height="30" rx="4" fill="#000" opacity="1" filter="url(#sh)"/>
<rect x="481" y="816" width="52" height="27" fill="#a9a7a7" rx="4" />
<text x="489.70" y="835.80" font-size="14.5" fill="#1e1e1e" stroke="#1e1e1e" stroke-width="0.4" textLength="33.30" lengthAdjust="spacingAndGlyphs" >STOP</text>
<rect x="542" y="818.5" width="115.5" height="32" rx="4" fill="#000" opacity="1" filter="url(#sh)"/>
<rect x="539" y="815" width="113" height="29" fill="#fdd31f" rx="4" />
<text x="563.00" y="835.80" font-size="14.5" fill="#2a2100" stroke="#2a2100" stroke-width="0.4" textLength="65.60" lengthAdjust="spacingAndGlyphs" >AutoFocus</text>
<text x="1.90" y="879.20" font-size="14" fill="#e4d9c0" stroke="#e4d9c0" stroke-width="0.4" textLength="110.41" lengthAdjust="spacingAndGlyphs" >exposure duration</text>
<rect x="124" y="868" width="57" height="11" fill="#e8e2e2" rx="0" />
<text x="194.00" y="879.20" font-size="14" fill="#e4d9c0" stroke="#e4d9c0" stroke-width="0.4" textLength="80.61" lengthAdjust="spacingAndGlyphs" >task progress</text>
<rect x="286" y="868" width="58" height="11" fill="#e8e2e2" rx="0" />
<text x="383.50" y="878.70" font-size="14" fill="#e4d9c0" stroke="#e4d9c0" stroke-width="0.4" textLength="142.79" lengthAdjust="spacingAndGlyphs" >#stars extracted = 1367</text>
<text x="542.70" y="878.40" font-size="14" fill="#e4d9c0" stroke="#e4d9c0" stroke-width="0.4" textLength="188.60" lengthAdjust="spacingAndGlyphs" >FWHMX = 3,76 / FWHMY = 4,1</text>
<text x="945.20" y="878.50" font-size="14" fill="#e4d9c0" stroke="#e4d9c0" stroke-width="0.4" textLength="320.90" lengthAdjust="spacingAndGlyphs" >C:\Users\MATTHIEU\Desktop\demo\ic1848_lumi.png</text>
<circle cx="974.7" cy="325.2" r="0.8" fill="#fff" opacity="0.91"/>
<circle cx="1307.0" cy="459.4" r="1.0" fill="#fff" opacity="0.50"/>
<circle cx="786.2" cy="543.4" r="1.2" fill="#fff" opacity="0.78"/>
<circle cx="1100.6" cy="416.4" r="0.6" fill="#fff" opacity="0.72"/>
<circle cx="1180.3" cy="621.9" r="0.7" fill="#fff" opacity="0.49"/>
<circle cx="1169.7" cy="418.0" r="0.8" fill="#fff" opacity="0.59"/>
<circle cx="1002.0" cy="333.9" r="1.2" fill="#fff" opacity="0.99"/>
<circle cx="1186.2" cy="321.8" r="0.7" fill="#fff" opacity="0.86"/>
<circle cx="821.4" cy="371.3" r="1.0" fill="#fff" opacity="0.46"/>
<circle cx="1145.5" cy="413.7" r="1.0" fill="#fff" opacity="0.54"/>
<circle cx="1043.7" cy="686.0" r="0.8" fill="#fff" opacity="0.88"/>
<circle cx="855.8" cy="770.6" r="0.7" fill="#fff" opacity="0.84"/>
<circle cx="1193.7" cy="665.6" r="0.8" fill="#fff" opacity="0.75"/>
<circle cx="1040.3" cy="814.7" r="0.6" fill="#fff" opacity="0.99"/>
<circle cx="900.4" cy="766.1" r="0.6" fill="#fff" opacity="0.49"/>
<circle cx="853.8" cy="598.2" r="0.7" fill="#fff" opacity="0.63"/>
<circle cx="714.3" cy="351.4" r="1.0" fill="#fff" opacity="0.45"/>
<circle cx="1347.5" cy="795.0" r="0.6" fill="#fff" opacity="0.86"/>
<circle cx="943.2" cy="670.2" r="0.6" fill="#fff" opacity="0.69"/>
<circle cx="745.7" cy="643.1" r="0.8" fill="#fff" opacity="0.86"/>
<circle cx="1329.1" cy="796.1" r="1.2" fill="#fff" opacity="0.52"/>
<circle cx="1201.9" cy="680.5" r="1.2" fill="#fff" opacity="0.49"/>
<circle cx="1025.2" cy="780.5" r="0.8" fill="#fff" opacity="0.54"/>
<circle cx="811.5" cy="468.8" r="1.2" fill="#fff" opacity="0.45"/>
<circle cx="1154.7" cy="395.6" r="1.0" fill="#fff" opacity="0.93"/>
<circle cx="1244.7" cy="801.8" r="0.6" fill="#fff" opacity="0.56"/>
<circle cx="1189.8" cy="354.1" r="1.0" fill="#fff" opacity="0.65"/>
<circle cx="862.9" cy="773.3" r="0.6" fill="#fff" opacity="0.62"/>
<circle cx="819.5" cy="411.8" r="1.2" fill="#fff" opacity="0.81"/>
<circle cx="1040.3" cy="448.5" r="1.0" fill="#fff" opacity="0.71"/>
<circle cx="975.3" cy="382.0" r="1.0" fill="#fff" opacity="0.85"/>
<circle cx="1111.2" cy="614.8" r="0.7" fill="#fff" opacity="0.72"/>
<circle cx="856.4" cy="613.0" r="0.7" fill="#fff" opacity="0.72"/>
<circle cx="1153.2" cy="666.2" r="0.6" fill="#fff" opacity="0.56"/>
<circle cx="981.3" cy="507.8" r="1.2" fill="#fff" opacity="0.72"/>
<circle cx="775.4" cy="711.6" r="0.7" fill="#fff" opacity="0.62"/>
<circle cx="1163.0" cy="338.2" r="1.0" fill="#fff" opacity="0.81"/>
<circle cx="965.2" cy="551.8" r="0.8" fill="#fff" opacity="0.59"/>
<circle cx="1023.7" cy="346.0" r="1.0" fill="#fff" opacity="0.42"/>
<circle cx="928.6" cy="795.2" r="0.6" fill="#fff" opacity="0.42"/>
<circle cx="1094.6" cy="417.0" r="1.0" fill="#fff" opacity="0.69"/>
<circle cx="881.8" cy="427.6" r="0.8" fill="#fff" opacity="0.84"/>
<circle cx="1251.9" cy="358.9" r="0.8" fill="#fff" opacity="0.62"/>
<circle cx="1263.9" cy="536.3" r="0.7" fill="#fff" opacity="0.45"/>
<circle cx="1233.3" cy="439.8" r="1.0" fill="#fff" opacity="0.52"/>
<circle cx="802.7" cy="811.1" r="0.6" fill="#fff" opacity="0.87"/>
<circle cx="926.0" cy="484.8" r="0.6" fill="#fff" opacity="0.54"/>
<circle cx="1018.6" cy="618.4" r="0.8" fill="#fff" opacity="0.74"/>
<circle cx="937.5" cy="824.5" r="0.8" fill="#fff" opacity="0.42"/>
<circle cx="1268.1" cy="368.5" r="0.7" fill="#fff" opacity="0.73"/>
<circle cx="1130.0" cy="531.6" r="1.2" fill="#fff" opacity="0.41"/>
<circle cx="1041.4" cy="623.6" r="0.8" fill="#fff" opacity="0.75"/>
<circle cx="1210.2" cy="404.5" r="1.0" fill="#fff" opacity="0.66"/>
<circle cx="945.8" cy="334.1" r="1.0" fill="#fff" opacity="0.61"/>
<circle cx="1232.5" cy="659.5" r="0.6" fill="#fff" opacity="0.59"/>
<circle cx="988.3" cy="484.6" r="1.0" fill="#fff" opacity="0.88"/>
<circle cx="786.9" cy="611.7" r="0.6" fill="#fff" opacity="0.74"/>
<circle cx="1019.6" cy="381.2" r="1.2" fill="#fff" opacity="0.50"/>
<circle cx="1312.3" cy="479.4" r="0.7" fill="#fff" opacity="0.72"/>
<circle cx="1003.0" cy="562.1" r="1.0" fill="#fff" opacity="0.53"/>
<circle cx="849.3" cy="704.5" r="0.7" fill="#fff" opacity="0.63"/>
<circle cx="1056.4" cy="835.6" r="1.0" fill="#fff" opacity="0.95"/>
<circle cx="1286.6" cy="605.7" r="1.2" fill="#fff" opacity="0.78"/>
<circle cx="808.8" cy="697.9" r="0.6" fill="#fff" opacity="0.79"/>
<circle cx="753.2" cy="784.2" r="0.6" fill="#fff" opacity="0.74"/>
<circle cx="784.9" cy="456.9" r="0.7" fill="#fff" opacity="0.53"/>
<circle cx="885.1" cy="576.8" r="1.0" fill="#fff" opacity="0.80"/>
<circle cx="1068.6" cy="655.7" r="1.2" fill="#fff" opacity="0.47"/>
<circle cx="725.4" cy="791.4" r="0.8" fill="#fff" opacity="0.54"/>
<circle cx="1024.1" cy="362.5" r="1.0" fill="#fff" opacity="0.47"/>
<circle cx="866.7" cy="476.7" r="1.2" fill="#fff" opacity="0.47"/>
<circle cx="846.6" cy="638.3" r="1.0" fill="#fff" opacity="0.56"/>
<circle cx="1274.1" cy="721.1" r="0.7" fill="#fff" opacity="0.78"/>
<circle cx="1039.2" cy="691.8" r="0.6" fill="#fff" opacity="0.88"/>
<circle cx="1015.2" cy="491.5" r="0.7" fill="#fff" opacity="0.87"/>
<circle cx="900.9" cy="695.2" r="0.8" fill="#fff" opacity="0.53"/>
<circle cx="1068.0" cy="449.2" r="0.6" fill="#fff" opacity="0.95"/>
<circle cx="837.6" cy="793.8" r="0.6" fill="#fff" opacity="0.41"/>
<circle cx="1069.4" cy="727.3" r="0.7" fill="#fff" opacity="0.60"/>
<circle cx="788.8" cy="634.5" r="0.8" fill="#fff" opacity="0.71"/>
<circle cx="724.7" cy="541.2" r="1.2" fill="#fff" opacity="0.64"/>
<circle cx="1123.0" cy="695.6" r="1.0" fill="#fff" opacity="0.74"/>
<circle cx="1344.8" cy="579.1" r="1.2" fill="#fff" opacity="0.44"/>
<circle cx="1013.9" cy="758.4" r="1.0" fill="#fff" opacity="0.95"/>
<circle cx="808.3" cy="537.8" r="0.6" fill="#fff" opacity="0.84"/>
<circle cx="1241.4" cy="457.4" r="0.8" fill="#fff" opacity="0.93"/>
<circle cx="1178.1" cy="566.0" r="1.0" fill="#fff" opacity="0.81"/>
<circle cx="784.2" cy="542.3" r="1.2" fill="#fff" opacity="0.40"/>
<circle cx="1002.0" cy="643.5" r="0.8" fill="#fff" opacity="0.50"/>
<circle cx="1143.9" cy="791.3" r="1.0" fill="#fff" opacity="0.50"/>
<circle cx="914.0" cy="630.0" r="1.0" fill="#fff" opacity="0.42"/>
<circle cx="864.2" cy="629.9" r="1.0" fill="#fff" opacity="0.42"/>
<circle cx="1139.0" cy="576.9" r="1.2" fill="#fff" opacity="0.86"/>
<circle cx="947.3" cy="676.0" r="1.2" fill="#fff" opacity="0.90"/>
<circle cx="898.6" cy="602.5" r="1.0" fill="#fff" opacity="0.67"/>
<circle cx="713.2" cy="709.6" r="0.7" fill="#fff" opacity="0.65"/>
<circle cx="1010.3" cy="638.2" r="0.8" fill="#fff" opacity="0.69"/>
<circle cx="1239.6" cy="627.1" r="1.0" fill="#fff" opacity="0.59"/>
<circle cx="768.9" cy="415.8" r="0.6" fill="#fff" opacity="0.86"/>
<circle cx="1341.5" cy="808.2" r="0.6" fill="#fff" opacity="0.87"/>
<circle cx="786.7" cy="353.1" r="0.7" fill="#fff" opacity="0.40"/>
<circle cx="923.4" cy="623.2" r="1.2" fill="#fff" opacity="0.77"/>
<circle cx="1318.4" cy="822.9" r="0.8" fill="#fff" opacity="0.61"/>
<circle cx="958.6" cy="619.8" r="1.2" fill="#fff" opacity="0.66"/>
<circle cx="1119.9" cy="441.6" r="0.6" fill="#fff" opacity="0.50"/>
<circle cx="893.0" cy="351.4" r="0.7" fill="#fff" opacity="0.48"/>
<circle cx="833.0" cy="458.3" r="0.8" fill="#fff" opacity="0.96"/>
<circle cx="736.4" cy="803.4" r="0.7" fill="#fff" opacity="0.88"/>
<circle cx="856.5" cy="819.0" r="0.7" fill="#fff" opacity="0.41"/>
<circle cx="798.8" cy="539.0" r="1.0" fill="#fff" opacity="0.41"/>
<circle cx="1321.7" cy="667.2" r="1.2" fill="#fff" opacity="0.49"/>
<circle cx="1234.8" cy="503.9" r="0.6" fill="#fff" opacity="0.84"/>
<circle cx="720.5" cy="736.4" r="0.8" fill="#fff" opacity="0.48"/>
<circle cx="938.8" cy="815.4" r="0.8" fill="#fff" opacity="0.52"/>
<circle cx="919.8" cy="356.5" r="0.7" fill="#fff" opacity="0.55"/>
<circle cx="1306.4" cy="407.5" r="0.7" fill="#fff" opacity="0.63"/>
<circle cx="992.6" cy="776.1" r="0.8" fill="#fff" opacity="0.48"/>
<circle cx="1147.0" cy="606.6" r="1.2" fill="#fff" opacity="0.55"/>
<circle cx="1152.1" cy="469.5" r="0.6" fill="#fff" opacity="0.71"/>
<circle cx="943.7" cy="527.0" r="0.7" fill="#fff" opacity="0.63"/>
<circle cx="1286.6" cy="376.2" r="1.2" fill="#fff" opacity="0.50"/>
<circle cx="1224.0" cy="415.3" r="1.2" fill="#fff" opacity="0.47"/>
<circle cx="775.5" cy="398.5" r="0.6" fill="#fff" opacity="0.67"/>
<circle cx="784.1" cy="453.2" r="0.7" fill="#fff" opacity="0.71"/>
<circle cx="851.2" cy="794.8" r="0.7" fill="#fff" opacity="0.78"/>
<circle cx="981.3" cy="463.7" r="0.6" fill="#fff" opacity="0.80"/>
<circle cx="1134.0" cy="608.0" r="1.2" fill="#fff" opacity="0.87"/>
<circle cx="843.7" cy="521.5" r="0.6" fill="#fff" opacity="0.58"/>
<circle cx="1285.5" cy="687.2" r="1.2" fill="#fff" opacity="0.66"/>
<circle cx="975.9" cy="831.3" r="1.0" fill="#fff" opacity="0.68"/>
<circle cx="1085.1" cy="500.7" r="1.2" fill="#fff" opacity="0.51"/>
<circle cx="847.1" cy="707.5" r="1.2" fill="#fff" opacity="0.89"/>
<circle cx="1225.0" cy="427.7" r="0.7" fill="#fff" opacity="0.51"/>
<circle cx="709.0" cy="774.4" r="0.7" fill="#fff" opacity="0.41"/>
<circle cx="1316.8" cy="789.6" r="0.8" fill="#fff" opacity="0.47"/>
<circle cx="1049.9" cy="813.7" r="0.6" fill="#fff" opacity="0.69"/>
<circle cx="1083.1" cy="494.6" r="0.6" fill="#fff" opacity="0.42"/>
<circle cx="1123.5" cy="371.5" r="1.0" fill="#fff" opacity="0.99"/>
<circle cx="753.4" cy="811.2" r="1.0" fill="#fff" opacity="0.60"/>
<circle cx="1008.9" cy="660.1" r="1.2" fill="#fff" opacity="0.63"/>
<circle cx="866.3" cy="761.4" r="1.0" fill="#fff" opacity="0.81"/>
<circle cx="936.4" cy="802.3" r="1.0" fill="#fff" opacity="0.97"/>
<circle cx="1003.8" cy="381.1" r="1.0" fill="#fff" opacity="0.94"/>
<circle cx="1283.6" cy="381.8" r="0.8" fill="#fff" opacity="0.45"/>
<circle cx="836.6" cy="373.7" r="1.0" fill="#fff" opacity="0.79"/>
<circle cx="1341.8" cy="575.1" r="0.7" fill="#fff" opacity="0.54"/>
<circle cx="879.0" cy="332.7" r="0.6" fill="#fff" opacity="0.50"/>
<circle cx="856.6" cy="376.2" r="1.0" fill="#fff" opacity="0.79"/>
<circle cx="827.2" cy="550.6" r="1.2" fill="#fff" opacity="0.60"/>
<circle cx="957.4" cy="460.7" r="1.0" fill="#fff" opacity="0.43"/>
<circle cx="1129.2" cy="689.7" r="0.6" fill="#fff" opacity="0.62"/>
<circle cx="713.5" cy="716.8" r="1.0" fill="#fff" opacity="0.80"/>
<circle cx="1233.9" cy="373.6" r="1.2" fill="#fff" opacity="0.67"/>
<circle cx="1226.0" cy="785.2" r="0.6" fill="#fff" opacity="0.50"/>
<circle cx="805.8" cy="805.5" r="1.2" fill="#fff" opacity="0.66"/>
<circle cx="1339.0" cy="762.8" r="0.8" fill="#fff" opacity="0.90"/>
<circle cx="972.6" cy="602.2" r="0.8" fill="#fff" opacity="0.78"/>
<circle cx="979.5" cy="412.6" r="0.7" fill="#fff" opacity="0.69"/>
<circle cx="1177.7" cy="615.2" r="0.6" fill="#fff" opacity="0.60"/>
<circle cx="1056.8" cy="735.6" r="1.0" fill="#fff" opacity="0.61"/>
<circle cx="1328.8" cy="731.1" r="1.2" fill="#fff" opacity="0.61"/>
<circle cx="823.4" cy="358.5" r="1.0" fill="#fff" opacity="0.91"/>
<circle cx="1002.4" cy="814.5" r="1.2" fill="#fff" opacity="0.52"/>
<circle cx="850.0" cy="714.7" r="0.8" fill="#fff" opacity="0.68"/>
<circle cx="987.1" cy="529.9" r="1.2" fill="#fff" opacity="0.46"/>
<circle cx="721.8" cy="502.0" r="1.0" fill="#fff" opacity="0.91"/>
<circle cx="720.5" cy="733.4" r="0.7" fill="#fff" opacity="0.80"/>
<circle cx="798.3" cy="621.9" r="0.6" fill="#fff" opacity="0.52"/>
<circle cx="722.7" cy="670.0" r="1.2" fill="#fff" opacity="0.79"/>
<circle cx="835.5" cy="769.1" r="0.8" fill="#fff" opacity="0.90"/>
<line x1="1028.5" y1="318" x2="1028.5" y2="838" stroke="#921818" stroke-width="1.6"/>
<line x1="704" y1="577.8" x2="1353" y2="577.8" stroke="#921818" stroke-width="1.6"/>
<g fill="none" stroke-width="1.4" filter="url(#glow)"><circle cx="990.4" cy="481.5" r="5.4" stroke="#5ae05a"/><circle cx="989.7" cy="473.3" r="5.4" stroke="#5ae05a"/><circle cx="980.1" cy="472.3" r="5.4" stroke="#3a9a3a"/><circle cx="834.8" cy="439.5" r="5.4" stroke="#40c840"/><circle cx="996.3" cy="759.2" r="5.4" stroke="#2f8f3a"/><circle cx="984.9" cy="484.3" r="5.4" stroke="#40c840"/><circle cx="986.1" cy="472.0" r="5.4" stroke="#40c840"/><circle cx="919.6" cy="517.9" r="5.4" stroke="#5ae05a"/><circle cx="915.0" cy="573.6" r="5.4" stroke="#2f8f3a"/><circle cx="1171.7" cy="638.6" r="5.4" stroke="#2f8f3a"/><circle cx="842.9" cy="439.3" r="5.4" stroke="#5ae05a"/><circle cx="1176.1" cy="641.5" r="5.4" stroke="#46be46"/><circle cx="943.4" cy="704.6" r="5.4" stroke="#3a9a3a"/><circle cx="932.6" cy="439.3" r="5.4" stroke="#3a9a3a"/><circle cx="1200.3" cy="513.8" r="5.4" stroke="#2f8f3a"/><circle cx="1255.1" cy="524.7" r="5.4" stroke="#46be46"/><circle cx="994.0" cy="738.0" r="5.4" stroke="#4ad64a"/><circle cx="1095.4" cy="392.2" r="5.4" stroke="#50dc50"/><circle cx="1115.1" cy="551.1" r="5.4" stroke="#50dc50"/><circle cx="1149.2" cy="595.9" r="5.4" stroke="#38b838"/><circle cx="967.2" cy="449.1" r="5.4" stroke="#46be46"/><circle cx="1169.3" cy="647.9" r="5.4" stroke="#40c840"/><circle cx="1149.7" cy="417.2" r="5.4" stroke="#4ad64a"/><circle cx="1218.2" cy="450.6" r="5.4" stroke="#3a9a3a"/><circle cx="1147.5" cy="410.3" r="5.4" stroke="#3a9a3a"/><circle cx="1076.3" cy="637.1" r="5.4" stroke="#2f8f3a"/><circle cx="1199.0" cy="661.6" r="5.4" stroke="#40c840"/><circle cx="838.0" cy="440.7" r="5.4" stroke="#3a9a3a"/><circle cx="1220.7" cy="446.4" r="5.4" stroke="#38b838"/><circle cx="1237.0" cy="583.7" r="5.4" stroke="#40c840"/><circle cx="1190.2" cy="632.2" r="5.4" stroke="#40c840"/><circle cx="953.4" cy="414.7" r="5.4" stroke="#38b838"/><circle cx="1104.1" cy="508.5" r="5.4" stroke="#2f8f3a"/><circle cx="1123.1" cy="550.9" r="5.4" stroke="#40c840"/><circle cx="1262.7" cy="668.1" r="5.4" stroke="#46be46"/><circle cx="1110.5" cy="502.2" r="5.4" stroke="#46be46"/><circle cx="923.6" cy="408.4" r="5.4" stroke="#40c840"/><circle cx="1194.7" cy="477.2" r="5.4" stroke="#3a9a3a"/><circle cx="1176.6" cy="633.9" r="5.4" stroke="#40c840"/><circle cx="1145.3" cy="413.1" r="5.4" stroke="#3a9a3a"/><circle cx="1185.4" cy="625.4" r="5.4" stroke="#46be46"/><circle cx="840.6" cy="434.1" r="5.4" stroke="#5ae05a"/><circle cx="1219.8" cy="446.1" r="5.4" stroke="#46be46"/><circle cx="908.7" cy="493.7" r="5.4" stroke="#4ad64a"/><circle cx="1105.2" cy="551.7" r="5.4" stroke="#50dc50"/><circle cx="973.7" cy="486.1" r="5.4" stroke="#2f8f3a"/><circle cx="1218.4" cy="445.1" r="5.4" stroke="#3a9a3a"/><circle cx="856.0" cy="522.8" r="5.4" stroke="#2f8f3a"/><circle cx="823.6" cy="649.2" r="5.4" stroke="#5ae05a"/><circle cx="1143.1" cy="591.3" r="5.4" stroke="#50dc50"/><circle cx="906.2" cy="571.4" r="5.4" stroke="#4ad64a"/><circle cx="1143.2" cy="584.0" r="5.4" stroke="#2f8f3a"/><circle cx="999.2" cy="716.2" r="5.4" stroke="#50dc50"/><circle cx="1219.2" cy="542.5" r="5.4" stroke="#38b838"/><circle cx="987.0" cy="731.4" r="5.4" stroke="#38b838"/><circle cx="1137.6" cy="593.6" r="5.4" stroke="#38b838"/><circle cx="1024.0" cy="567.7" r="5.4" stroke="#50dc50"/><circle cx="972.9" cy="626.8" r="5.4" stroke="#46be46"/><circle cx="849.7" cy="527.8" r="5.4" stroke="#50dc50"/><circle cx="1255.1" cy="442.4" r="5.4" stroke="#50dc50"/><circle cx="925.8" cy="442.9" r="5.4" stroke="#38b838"/><circle cx="1266.7" cy="520.3" r="5.4" stroke="#3a9a3a"/><circle cx="1052.4" cy="443.5" r="5.4" stroke="#2f8f3a"/><circle cx="1104.6" cy="502.0" r="5.4" stroke="#38b838"/><circle cx="987.2" cy="488.6" r="5.4" stroke="#46be46"/><circle cx="1238.9" cy="727.5" r="5.4" stroke="#46be46"/><circle cx="888.0" cy="454.1" r="5.4" stroke="#4ad64a"/><circle cx="1091.6" cy="550.4" r="5.4" stroke="#38b838"/><circle cx="882.8" cy="451.0" r="5.4" stroke="#38b838"/><circle cx="1227.8" cy="406.6" r="5.4" stroke="#40c840"/><circle cx="979.9" cy="476.2" r="5.4" stroke="#50dc50"/><circle cx="1233.8" cy="601.5" r="5.4" stroke="#5ae05a"/><circle cx="876.7" cy="659.5" r="5.4" stroke="#50dc50"/><circle cx="1027.8" cy="711.2" r="5.4" stroke="#50dc50"/><circle cx="1225.4" cy="449.1" r="5.4" stroke="#4ad64a"/><circle cx="1113.0" cy="499.2" r="5.4" stroke="#5ae05a"/><circle cx="1242.9" cy="760.6" r="5.4" stroke="#40c840"/><circle cx="1108.2" cy="505.5" r="5.4" stroke="#3a9a3a"/><circle cx="996.8" cy="710.2" r="5.4" stroke="#40c840"/><circle cx="1048.4" cy="714.5" r="5.4" stroke="#40c840"/><circle cx="881.3" cy="653.5" r="5.4" stroke="#4ad64a"/><circle cx="1070.6" cy="759.6" r="5.4" stroke="#46be46"/><circle cx="947.1" cy="417.0" r="5.4" stroke="#38b838"/><circle cx="1144.9" cy="405.9" r="5.4" stroke="#3a9a3a"/><circle cx="790.0" cy="722.3" r="5.4" stroke="#4ad64a"/><circle cx="989.9" cy="445.3" r="5.4" stroke="#3a9a3a"/><circle cx="1181.0" cy="696.6" r="5.4" stroke="#38b838"/><circle cx="1148.1" cy="590.5" r="5.4" stroke="#2f8f3a"/><circle cx="1227.1" cy="457.3" r="5.4" stroke="#5ae05a"/><circle cx="1021.5" cy="576.3" r="5.4" stroke="#2f8f3a"/><circle cx="865.6" cy="474.2" r="5.4" stroke="#5ae05a"/><circle cx="935.0" cy="442.6" r="5.4" stroke="#3a9a3a"/><circle cx="1244.0" cy="548.1" r="5.4" stroke="#38b838"/><circle cx="853.0" cy="715.2" r="5.4" stroke="#5ae05a"/><circle cx="984.0" cy="448.1" r="5.4" stroke="#3a9a3a"/><circle cx="1196.5" cy="573.6" r="5.4" stroke="#38b838"/><circle cx="1138.5" cy="420.7" r="5.4" stroke="#40c840"/><circle cx="939.2" cy="534.5" r="5.4" stroke="#38b838"/><circle cx="1214.6" cy="657.6" r="5.4" stroke="#2f8f3a"/><circle cx="997.2" cy="481.7" r="5.4" stroke="#3a9a3a"/><circle cx="1005.9" cy="614.5" r="5.4" stroke="#4ad64a"/><circle cx="929.0" cy="660.9" r="5.4" stroke="#2f8f3a"/><circle cx="820.4" cy="578.9" r="5.4" stroke="#38b838"/><circle cx="841.7" cy="437.7" r="5.4" stroke="#5ae05a"/><circle cx="975.3" cy="656.2" r="5.4" stroke="#2f8f3a"/><circle cx="818.9" cy="482.4" r="5.4" stroke="#5ae05a"/><circle cx="1102.6" cy="499.1" r="5.4" stroke="#46be46"/><circle cx="1226.3" cy="441.3" r="5.4" stroke="#50dc50"/><circle cx="1266.8" cy="527.0" r="5.4" stroke="#3a9a3a"/><circle cx="1131.4" cy="549.9" r="5.4" stroke="#3a9a3a"/><circle cx="1193.4" cy="573.9" r="5.4" stroke="#5ae05a"/><circle cx="792.7" cy="565.4" r="5.4" stroke="#38b838"/><circle cx="999.9" cy="515.2" r="5.4" stroke="#3a9a3a"/><circle cx="918.7" cy="482.5" r="5.4" stroke="#50dc50"/><circle cx="986.9" cy="446.3" r="5.4" stroke="#46be46"/><circle cx="877.1" cy="647.7" r="5.4" stroke="#50dc50"/><circle cx="1185.7" cy="498.1" r="5.4" stroke="#5ae05a"/><circle cx="1009.6" cy="571.5" r="5.4" stroke="#38b838"/><circle cx="836.6" cy="612.3" r="5.4" stroke="#40c840"/><circle cx="961.5" cy="552.1" r="5.4" stroke="#40c840"/><circle cx="843.3" cy="679.2" r="5.4" stroke="#46be46"/><circle cx="1053.8" cy="452.4" r="5.4" stroke="#3a9a3a"/><circle cx="1254.4" cy="719.3" r="5.4" stroke="#5ae05a"/><circle cx="1243.8" cy="542.2" r="5.4" stroke="#2f8f3a"/><circle cx="1087.3" cy="502.3" r="5.4" stroke="#2f8f3a"/><circle cx="1190.2" cy="446.0" r="5.4" stroke="#50dc50"/><circle cx="1023.2" cy="507.6" r="5.4" stroke="#5ae05a"/><circle cx="1000.9" cy="736.7" r="5.4" stroke="#38b838"/><circle cx="1098.6" cy="551.4" r="5.4" stroke="#4ad64a"/><circle cx="1047.3" cy="721.9" r="5.4" stroke="#40c840"/><circle cx="833.2" cy="608.0" r="5.4" stroke="#38b838"/><circle cx="927.3" cy="544.7" r="5.4" stroke="#3a9a3a"/><circle cx="1242.5" cy="753.1" r="5.4" stroke="#3a9a3a"/><circle cx="821.1" cy="653.0" r="5.4" stroke="#2f8f3a"/><circle cx="790.8" cy="478.6" r="5.4" stroke="#50dc50"/><circle cx="1224.8" cy="599.4" r="5.4" stroke="#5ae05a"/><circle cx="1212.6" cy="648.2" r="5.4" stroke="#38b838"/><circle cx="1079.0" cy="597.3" r="5.4" stroke="#5ae05a"/><circle cx="901.5" cy="594.3" r="5.4" stroke="#4ad64a"/><circle cx="1144.1" cy="734.1" r="5.4" stroke="#5ae05a"/><circle cx="1259.2" cy="547.5" r="5.4" stroke="#3a9a3a"/><circle cx="809.9" cy="560.4" r="5.4" stroke="#2f8f3a"/><circle cx="981.4" cy="517.7" r="5.4" stroke="#46be46"/><circle cx="988.8" cy="714.3" r="5.4" stroke="#4ad64a"/><circle cx="878.1" cy="751.8" r="5.4" stroke="#38b838"/><circle cx="1095.7" cy="506.4" r="5.4" stroke="#40c840"/><circle cx="837.3" cy="410.3" r="5.4" stroke="#46be46"/><circle cx="1012.6" cy="541.0" r="5.4" stroke="#4ad64a"/><circle cx="1016.2" cy="713.1" r="5.4" stroke="#3a9a3a"/><circle cx="817.7" cy="445.6" r="5.4" stroke="#38b838"/><circle cx="1190.6" cy="569.4" r="5.4" stroke="#40c840"/><circle cx="853.5" cy="503.7" r="5.4" stroke="#40c840"/><circle cx="834.8" cy="643.5" r="5.4" stroke="#38b838"/><circle cx="1186.7" cy="502.7" r="5.4" stroke="#38b838"/><circle cx="800.4" cy="409.5" r="5.4" stroke="#50dc50"/><circle cx="1103.2" cy="639.1" r="5.4" stroke="#50dc50"/><circle cx="1071.5" cy="685.5" r="5.4" stroke="#38b838"/><circle cx="933.6" cy="602.9" r="5.4" stroke="#5ae05a"/><circle cx="918.2" cy="543.3" r="5.4" stroke="#46be46"/><circle cx="1021.7" cy="511.3" r="5.4" stroke="#2f8f3a"/><circle cx="941.7" cy="695.2" r="5.4" stroke="#5ae05a"/><circle cx="909.1" cy="593.0" r="5.4" stroke="#4ad64a"/><circle cx="1248.3" cy="554.7" r="5.4" stroke="#40c840"/><circle cx="1051.4" cy="459.0" r="5.4" stroke="#2f8f3a"/><circle cx="818.6" cy="574.6" r="5.4" stroke="#46be46"/><circle cx="1120.7" cy="553.9" r="5.4" stroke="#50dc50"/><circle cx="877.2" cy="518.8" r="5.4" stroke="#5ae05a"/><circle cx="816.2" cy="513.8" r="5.4" stroke="#40c840"/><circle cx="1105.5" cy="497.0" r="5.4" stroke="#38b838"/><circle cx="1097.4" cy="400.0" r="5.4" stroke="#4ad64a"/><circle cx="1230.3" cy="414.7" r="5.4" stroke="#5ae05a"/><circle cx="1089.7" cy="498.2" r="5.4" stroke="#4ad64a"/><circle cx="1041.3" cy="461.7" r="5.4" stroke="#5ae05a"/><circle cx="1008.4" cy="693.3" r="5.4" stroke="#3a9a3a"/><circle cx="1228.4" cy="442.6" r="5.4" stroke="#38b838"/><circle cx="1252.1" cy="518.9" r="5.4" stroke="#2f8f3a"/><circle cx="1138.3" cy="585.7" r="5.4" stroke="#46be46"/><circle cx="844.4" cy="708.1" r="5.4" stroke="#3a9a3a"/><circle cx="831.4" cy="636.3" r="5.4" stroke="#38b838"/><circle cx="1021.4" cy="715.0" r="5.4" stroke="#3a9a3a"/><circle cx="1261.0" cy="477.5" r="5.4" stroke="#4ad64a"/><circle cx="1226.0" cy="449.8" r="5.4" stroke="#5ae05a"/><circle cx="1237.1" cy="601.3" r="5.4" stroke="#38b838"/><circle cx="1015.1" cy="412.7" r="5.4" stroke="#4ad64a"/><circle cx="1259.6" cy="675.1" r="5.4" stroke="#5ae05a"/><circle cx="908.9" cy="511.3" r="5.4" stroke="#50dc50"/><circle cx="930.8" cy="657.1" r="5.4" stroke="#40c840"/><circle cx="1161.6" cy="767.0" r="5.4" stroke="#5ae05a"/><circle cx="1099.2" cy="441.6" r="5.4" stroke="#5ae05a"/><circle cx="1122.6" cy="695.8" r="5.4" stroke="#3a9a3a"/><circle cx="827.4" cy="630.7" r="5.4" stroke="#3a9a3a"/><circle cx="849.7" cy="568.3" r="5.4" stroke="#46be46"/><circle cx="1109.1" cy="534.4" r="5.4" stroke="#3a9a3a"/><circle cx="954.3" cy="418.4" r="5.4" stroke="#38b838"/><circle cx="1057.2" cy="574.1" r="5.4" stroke="#2f8f3a"/><circle cx="838.1" cy="643.4" r="5.4" stroke="#5ae05a"/><circle cx="922.6" cy="439.1" r="5.4" stroke="#4ad64a"/><circle cx="836.8" cy="600.3" r="5.4" stroke="#3a9a3a"/><circle cx="1222.9" cy="696.6" r="5.4" stroke="#38b838"/><circle cx="1045.7" cy="714.5" r="5.4" stroke="#40c840"/><circle cx="1213.1" cy="610.6" r="5.4" stroke="#5ae05a"/><circle cx="1023.8" cy="713.0" r="5.4" stroke="#3a9a3a"/><circle cx="991.8" cy="620.0" r="5.4" stroke="#4ad64a"/><circle cx="1011.7" cy="717.6" r="5.4" stroke="#5ae05a"/><circle cx="905.8" cy="675.2" r="5.4" stroke="#46be46"/><circle cx="995.9" cy="407.3" r="5.4" stroke="#50dc50"/><circle cx="1067.1" cy="637.8" r="5.4" stroke="#50dc50"/><circle cx="1073.3" cy="628.1" r="5.4" stroke="#4ad64a"/><circle cx="913.9" cy="410.0" r="5.4" stroke="#38b838"/><circle cx="1185.3" cy="754.2" r="5.4" stroke="#2f8f3a"/><circle cx="1248.4" cy="751.6" r="5.4" stroke="#2f8f3a"/><circle cx="1242.6" cy="606.0" r="5.4" stroke="#50dc50"/><circle cx="1082.6" cy="596.7" r="5.4" stroke="#5ae05a"/><circle cx="1042.4" cy="638.2" r="5.4" stroke="#50dc50"/><circle cx="845.4" cy="438.4" r="5.4" stroke="#50dc50"/><circle cx="1117.7" cy="670.4" r="5.4" stroke="#38b838"/><circle cx="845.0" cy="532.8" r="5.4" stroke="#46be46"/><circle cx="880.2" cy="750.6" r="5.4" stroke="#5ae05a"/><circle cx="999.2" cy="455.2" r="5.4" stroke="#50dc50"/><circle cx="877.5" cy="653.7" r="5.4" stroke="#40c840"/><circle cx="984.4" cy="469.3" r="5.4" stroke="#5ae05a"/><circle cx="1141.1" cy="565.2" r="5.4" stroke="#3a9a3a"/><circle cx="1247.0" cy="766.8" r="5.4" stroke="#40c840"/><circle cx="928.8" cy="730.3" r="5.4" stroke="#46be46"/><circle cx="1222.5" cy="449.4" r="5.4" stroke="#4ad64a"/><circle cx="1115.9" cy="497.1" r="5.4" stroke="#40c840"/><circle cx="1222.7" cy="544.9" r="5.4" stroke="#3a9a3a"/><circle cx="844.6" cy="430.9" r="5.4" stroke="#5ae05a"/><circle cx="825.7" cy="641.9" r="5.4" stroke="#4ad64a"/><circle cx="1021.0" cy="569.6" r="5.4" stroke="#46be46"/><circle cx="848.0" cy="566.6" r="5.4" stroke="#2f8f3a"/><circle cx="922.0" cy="442.7" r="5.4" stroke="#38b838"/><circle cx="1098.4" cy="611.6" r="5.4" stroke="#4ad64a"/><circle cx="1258.6" cy="653.3" r="5.4" stroke="#5ae05a"/><circle cx="969.4" cy="582.0" r="5.4" stroke="#50dc50"/><circle cx="947.4" cy="497.7" r="5.4" stroke="#4ad64a"/><circle cx="1140.5" cy="614.6" r="5.4" stroke="#3a9a3a"/><circle cx="1023.6" cy="720.6" r="5.4" stroke="#46be46"/><circle cx="1242.3" cy="459.5" r="5.4" stroke="#40c840"/><circle cx="1221.8" cy="466.3" r="5.4" stroke="#46be46"/><circle cx="841.0" cy="435.1" r="5.4" stroke="#38b838"/><circle cx="980.0" cy="478.6" r="5.4" stroke="#2f8f3a"/><circle cx="974.9" cy="476.2" r="5.4" stroke="#50dc50"/><circle cx="853.1" cy="676.8" r="5.4" stroke="#50dc50"/><circle cx="1085.9" cy="622.6" r="5.4" stroke="#50dc50"/><circle cx="1103.0" cy="540.6" r="5.4" stroke="#2f8f3a"/><circle cx="1267.0" cy="700.0" r="5.4" stroke="#40c840"/><circle cx="864.5" cy="616.2" r="5.4" stroke="#2f8f3a"/><circle cx="1152.6" cy="416.2" r="5.4" stroke="#46be46"/><circle cx="1043.4" cy="558.9" r="5.4" stroke="#46be46"/><circle cx="881.8" cy="745.3" r="5.4" stroke="#3a9a3a"/><circle cx="868.5" cy="651.3" r="5.4" stroke="#46be46"/><circle cx="1192.8" cy="501.0" r="5.4" stroke="#4ad64a"/><circle cx="1066.9" cy="762.5" r="5.4" stroke="#46be46"/><circle cx="1058.0" cy="450.6" r="5.4" stroke="#2f8f3a"/><circle cx="1113.5" cy="429.1" r="5.4" stroke="#2f8f3a"/><circle cx="955.4" cy="556.4" r="5.4" stroke="#4ad64a"/><circle cx="893.4" cy="729.9" r="5.4" stroke="#38b838"/><circle cx="960.4" cy="625.8" r="5.4" stroke="#38b838"/><circle cx="1062.7" cy="674.8" r="5.4" stroke="#2f8f3a"/><circle cx="1218.2" cy="464.3" r="5.4" stroke="#2f8f3a"/><circle cx="1096.1" cy="395.0" r="5.4" stroke="#3a9a3a"/><circle cx="1231.3" cy="487.3" r="5.4" stroke="#4ad64a"/><circle cx="1010.6" cy="454.0" r="5.4" stroke="#46be46"/><circle cx="918.6" cy="411.1" r="5.4" stroke="#4ad64a"/><circle cx="866.3" cy="570.2" r="5.4" stroke="#40c840"/><circle cx="1140.6" cy="420.3" r="5.4" stroke="#38b838"/><circle cx="1169.5" cy="638.4" r="5.4" stroke="#3a9a3a"/><circle cx="970.4" cy="493.1" r="5.4" stroke="#46be46"/><circle cx="938.1" cy="603.8" r="5.4" stroke="#50dc50"/><circle cx="1266.2" cy="627.1" r="5.4" stroke="#5ae05a"/><circle cx="1104.4" cy="504.0" r="5.4" stroke="#5ae05a"/><circle cx="1132.2" cy="449.5" r="5.4" stroke="#4ad64a"/><circle cx="1264.5" cy="525.5" r="5.4" stroke="#2f8f3a"/><circle cx="1021.1" cy="457.8" r="5.4" stroke="#5ae05a"/><circle cx="1136.5" cy="407.8" r="5.4" stroke="#2f8f3a"/><circle cx="1060.4" cy="522.6" r="5.4" stroke="#40c840"/><circle cx="910.1" cy="767.6" r="5.4" stroke="#3a9a3a"/><circle cx="1130.1" cy="547.2" r="5.4" stroke="#50dc50"/><circle cx="1172.2" cy="749.2" r="5.4" stroke="#3a9a3a"/><circle cx="1202.6" cy="561.9" r="5.4" stroke="#5ae05a"/><circle cx="910.6" cy="440.1" r="5.4" stroke="#50dc50"/><circle cx="1220.2" cy="730.3" r="5.4" stroke="#40c840"/><circle cx="903.4" cy="628.8" r="5.4" stroke="#2f8f3a"/><circle cx="1230.8" cy="583.6" r="5.4" stroke="#4ad64a"/><circle cx="956.7" cy="470.8" r="5.4" stroke="#38b838"/><circle cx="1191.5" cy="571.8" r="5.4" stroke="#50dc50"/><circle cx="1137.5" cy="747.8" r="5.4" stroke="#4ad64a"/><circle cx="964.4" cy="487.7" r="5.4" stroke="#38b838"/><circle cx="1222.7" cy="675.3" r="5.4" stroke="#3a9a3a"/><circle cx="1154.0" cy="602.5" r="5.4" stroke="#3a9a3a"/><circle cx="795.5" cy="658.5" r="5.4" stroke="#50dc50"/><circle cx="1055.9" cy="532.1" r="5.4" stroke="#46be46"/><circle cx="865.6" cy="468.1" r="5.4" stroke="#50dc50"/><circle cx="1097.7" cy="700.2" r="5.4" stroke="#4ad64a"/><circle cx="943.9" cy="423.8" r="5.4" stroke="#38b838"/><circle cx="925.9" cy="476.5" r="5.4" stroke="#46be46"/><circle cx="1262.2" cy="721.2" r="5.4" stroke="#2f8f3a"/><circle cx="984.3" cy="472.5" r="5.4" stroke="#50dc50"/><circle cx="1225.7" cy="441.6" r="5.4" stroke="#5ae05a"/><circle cx="983.8" cy="494.0" r="5.4" stroke="#40c840"/><circle cx="896.6" cy="457.3" r="5.4" stroke="#40c840"/><circle cx="1012.5" cy="760.7" r="5.4" stroke="#3a9a3a"/><circle cx="1157.2" cy="509.3" r="5.4" stroke="#50dc50"/><circle cx="1045.1" cy="518.9" r="5.4" stroke="#3a9a3a"/><circle cx="1101.9" cy="401.9" r="5.4" stroke="#38b838"/><circle cx="1011.3" cy="532.2" r="5.4" stroke="#4ad64a"/><circle cx="1176.6" cy="598.6" r="5.4" stroke="#50dc50"/><circle cx="1043.5" cy="390.8" r="5.4" stroke="#50dc50"/><circle cx="936.3" cy="528.6" r="5.4" stroke="#38b838"/><circle cx="1126.0" cy="623.2" r="5.4" stroke="#50dc50"/><circle cx="851.6" cy="692.8" r="5.4" stroke="#5ae05a"/><circle cx="980.9" cy="447.3" r="5.4" stroke="#38b838"/><circle cx="837.2" cy="655.1" r="5.4" stroke="#2f8f3a"/><circle cx="952.0" cy="588.3" r="5.4" stroke="#50dc50"/><circle cx="1202.8" cy="551.5" r="5.4" stroke="#50dc50"/><circle cx="1020.4" cy="396.1" r="5.4" stroke="#50dc50"/><circle cx="1020.9" cy="735.8" r="5.4" stroke="#3a9a3a"/><circle cx="822.7" cy="513.5" r="5.4" stroke="#3a9a3a"/><circle cx="1193.7" cy="390.0" r="5.4" stroke="#40c840"/><circle cx="966.3" cy="492.3" r="5.4" stroke="#38b838"/><circle cx="1029.8" cy="416.6" r="5.4" stroke="#5ae05a"/><circle cx="1085.6" cy="557.9" r="5.4" stroke="#2f8f3a"/><circle cx="954.4" cy="546.9" r="5.4" stroke="#46be46"/><circle cx="987.6" cy="737.5" r="5.4" stroke="#3a9a3a"/><circle cx="1195.8" cy="620.0" r="5.4" stroke="#46be46"/><circle cx="1037.7" cy="461.0" r="5.4" stroke="#2f8f3a"/><circle cx="1102.1" cy="613.1" r="5.4" stroke="#5ae05a"/><circle cx="1223.6" cy="469.1" r="5.4" stroke="#2f8f3a"/><circle cx="1195.5" cy="469.0" r="5.4" stroke="#38b838"/><circle cx="920.5" cy="550.7" r="5.4" stroke="#5ae05a"/><circle cx="1048.0" cy="458.9" r="5.4" stroke="#40c840"/><circle cx="1232.8" cy="482.5" r="5.4" stroke="#46be46"/><circle cx="1025.6" cy="455.9" r="5.4" stroke="#4ad64a"/><circle cx="1078.1" cy="516.6" r="5.4" stroke="#2f8f3a"/><circle cx="868.5" cy="605.6" r="5.4" stroke="#40c840"/><circle cx="1015.9" cy="396.8" r="5.4" stroke="#3a9a3a"/><circle cx="1187.4" cy="626.5" r="5.4" stroke="#50dc50"/><circle cx="874.9" cy="509.9" r="5.4" stroke="#50dc50"/><circle cx="989.1" cy="446.3" r="5.4" stroke="#46be46"/><circle cx="1051.8" cy="459.0" r="5.4" stroke="#40c840"/><circle cx="1018.4" cy="569.4" r="5.4" stroke="#40c840"/><circle cx="983.3" cy="569.1" r="5.4" stroke="#50dc50"/><circle cx="1143.7" cy="392.2" r="5.4" stroke="#3a9a3a"/><circle cx="1191.4" cy="558.3" r="5.4" stroke="#4ad64a"/><circle cx="1149.2" cy="522.0" r="5.4" stroke="#38b838"/><circle cx="1138.5" cy="755.4" r="5.4" stroke="#5ae05a"/><circle cx="975.3" cy="640.6" r="5.4" stroke="#4ad64a"/><circle cx="1206.7" cy="657.2" r="5.4" stroke="#4ad64a"/><circle cx="942.9" cy="460.8" r="5.4" stroke="#46be46"/><circle cx="966.7" cy="489.9" r="5.4" stroke="#46be46"/><circle cx="1194.0" cy="575.4" r="5.4" stroke="#2f8f3a"/><circle cx="974.5" cy="729.6" r="5.4" stroke="#4ad64a"/><circle cx="1010.6" cy="604.5" r="5.4" stroke="#2f8f3a"/><circle cx="1020.2" cy="469.1" r="5.4" stroke="#5ae05a"/><circle cx="977.0" cy="472.5" r="5.4" stroke="#38b838"/><circle cx="1210.8" cy="673.1" r="5.4" stroke="#50dc50"/><circle cx="1067.3" cy="673.2" r="5.4" stroke="#38b838"/><circle cx="1001.6" cy="420.9" r="5.4" stroke="#50dc50"/><circle cx="1038.1" cy="416.5" r="5.4" stroke="#50dc50"/><circle cx="805.6" cy="496.5" r="5.4" stroke="#50dc50"/><circle cx="848.4" cy="571.1" r="5.4" stroke="#38b838"/><circle cx="1155.3" cy="721.3" r="5.4" stroke="#2f8f3a"/><circle cx="1218.9" cy="746.2" r="5.4" stroke="#5ae05a"/><circle cx="1202.2" cy="579.5" r="5.4" stroke="#50dc50"/><circle cx="789.0" cy="589.4" r="5.4" stroke="#4ad64a"/><circle cx="1183.2" cy="497.4" r="5.4" stroke="#4ad64a"/><circle cx="955.2" cy="533.0" r="5.4" stroke="#5ae05a"/><circle cx="1018.0" cy="415.6" r="5.4" stroke="#5ae05a"/><circle cx="1020.1" cy="724.1" r="5.4" stroke="#38b838"/><circle cx="1095.3" cy="638.7" r="5.4" stroke="#46be46"/><circle cx="1132.7" cy="581.9" r="5.4" stroke="#46be46"/><circle cx="918.1" cy="543.7" r="5.4" stroke="#3a9a3a"/><circle cx="921.4" cy="708.1" r="5.4" stroke="#2f8f3a"/><circle cx="1243.0" cy="458.9" r="5.4" stroke="#3a9a3a"/><circle cx="1104.4" cy="546.8" r="5.4" stroke="#38b838"/><circle cx="1071.5" cy="608.3" r="5.4" stroke="#50dc50"/><circle cx="1012.4" cy="719.3" r="5.4" stroke="#5ae05a"/><circle cx="801.3" cy="416.3" r="5.4" stroke="#46be46"/><circle cx="1091.5" cy="619.8" r="5.4" stroke="#2f8f3a"/><circle cx="1160.2" cy="467.3" r="5.4" stroke="#4ad64a"/><circle cx="1166.3" cy="505.2" r="5.4" stroke="#38b838"/><circle cx="943.0" cy="514.5" r="5.4" stroke="#40c840"/><circle cx="1234.3" cy="446.1" r="5.4" stroke="#4ad64a"/><circle cx="1020.2" cy="466.0" r="5.4" stroke="#2f8f3a"/><circle cx="1070.0" cy="730.4" r="5.4" stroke="#40c840"/><circle cx="977.8" cy="470.8" r="5.4" stroke="#5ae05a"/><circle cx="970.8" cy="475.7" r="5.4" stroke="#2f8f3a"/><circle cx="993.8" cy="754.8" r="5.4" stroke="#50dc50"/><circle cx="1049.8" cy="598.5" r="5.4" stroke="#5ae05a"/><circle cx="1184.0" cy="557.9" r="5.4" stroke="#5ae05a"/><circle cx="799.6" cy="449.9" r="5.4" stroke="#4ad64a"/><circle cx="915.0" cy="593.9" r="5.4" stroke="#4ad64a"/><circle cx="1152.1" cy="541.8" r="5.4" stroke="#38b838"/><circle cx="923.8" cy="502.0" r="5.4" stroke="#46be46"/><circle cx="976.8" cy="442.0" r="5.4" stroke="#3a9a3a"/><circle cx="985.7" cy="614.0" r="5.4" stroke="#40c840"/><circle cx="1074.4" cy="514.4" r="5.4" stroke="#38b838"/><circle cx="1089.9" cy="537.8" r="5.4" stroke="#5ae05a"/><circle cx="1127.2" cy="576.2" r="5.4" stroke="#4ad64a"/><circle cx="1077.1" cy="620.5" r="5.4" stroke="#3a9a3a"/><circle cx="1144.0" cy="414.6" r="5.4" stroke="#50dc50"/><circle cx="1201.2" cy="712.4" r="5.4" stroke="#50dc50"/><circle cx="1078.1" cy="500.6" r="5.4" stroke="#50dc50"/><circle cx="1169.1" cy="652.6" r="5.4" stroke="#38b838"/><circle cx="1155.2" cy="514.6" r="5.4" stroke="#50dc50"/><circle cx="1169.9" cy="756.1" r="5.4" stroke="#3a9a3a"/><circle cx="985.1" cy="576.5" r="5.4" stroke="#4ad64a"/><circle cx="1234.0" cy="519.2" r="5.4" stroke="#5ae05a"/><circle cx="1154.7" cy="685.4" r="5.4" stroke="#50dc50"/><circle cx="1255.6" cy="447.9" r="5.4" stroke="#46be46"/><circle cx="1091.6" cy="620.0" r="5.4" stroke="#46be46"/><circle cx="1110.3" cy="597.8" r="5.4" stroke="#40c840"/><circle cx="1082.2" cy="739.3" r="5.4" stroke="#38b838"/><circle cx="1087.1" cy="496.7" r="5.4" stroke="#46be46"/><circle cx="876.6" cy="661.4" r="5.4" stroke="#46be46"/><circle cx="1091.3" cy="494.5" r="5.4" stroke="#5ae05a"/><circle cx="1082.3" cy="633.1" r="5.4" stroke="#2f8f3a"/><circle cx="1203.1" cy="505.3" r="5.4" stroke="#2f8f3a"/><circle cx="1196.6" cy="451.9" r="5.4" stroke="#38b838"/><circle cx="1078.6" cy="517.9" r="5.4" stroke="#3a9a3a"/><circle cx="937.0" cy="678.1" r="5.4" stroke="#46be46"/><circle cx="935.5" cy="551.6" r="5.4" stroke="#3a9a3a"/><circle cx="938.1" cy="449.6" r="5.4" stroke="#38b838"/><circle cx="985.1" cy="476.8" r="5.4" stroke="#50dc50"/><circle cx="807.5" cy="534.3" r="5.4" stroke="#50dc50"/><circle cx="1113.7" cy="673.7" r="5.4" stroke="#46be46"/><circle cx="907.2" cy="521.2" r="5.4" stroke="#46be46"/><circle cx="835.5" cy="603.1" r="5.4" stroke="#3a9a3a"/><circle cx="835.0" cy="765.0" r="5.4" stroke="#50dc50"/><circle cx="1085.5" cy="498.8" r="5.4" stroke="#5ae05a"/><circle cx="1052.9" cy="573.6" r="5.4" stroke="#40c840"/><circle cx="1155.2" cy="737.9" r="5.4" stroke="#38b838"/><circle cx="1024.4" cy="488.8" r="5.4" stroke="#46be46"/><circle cx="1226.4" cy="474.2" r="5.4" stroke="#2f8f3a"/><circle cx="1176.2" cy="525.8" r="5.4" stroke="#5ae05a"/><circle cx="898.9" cy="720.0" r="5.4" stroke="#2f8f3a"/><circle cx="856.9" cy="513.2" r="5.4" stroke="#46be46"/><circle cx="952.2" cy="572.9" r="5.4" stroke="#38b838"/><circle cx="815.9" cy="452.8" r="5.4" stroke="#3a9a3a"/><circle cx="1035.2" cy="459.8" r="5.4" stroke="#4ad64a"/><circle cx="935.2" cy="629.3" r="5.4" stroke="#5ae05a"/><circle cx="1175.8" cy="636.9" r="5.4" stroke="#2f8f3a"/><circle cx="901.6" cy="707.5" r="5.4" stroke="#38b838"/><circle cx="1167.8" cy="651.8" r="5.4" stroke="#38b838"/><circle cx="1060.6" cy="572.3" r="5.4" stroke="#3a9a3a"/><circle cx="1085.0" cy="460.2" r="5.4" stroke="#50dc50"/><circle cx="944.3" cy="423.1" r="5.4" stroke="#40c840"/><circle cx="959.9" cy="446.7" r="5.4" stroke="#46be46"/><circle cx="1259.9" cy="519.7" r="5.4" stroke="#50dc50"/><circle cx="956.9" cy="573.4" r="5.4" stroke="#5ae05a"/><circle cx="794.5" cy="469.4" r="5.4" stroke="#5ae05a"/><circle cx="895.5" cy="701.4" r="5.4" stroke="#38b838"/><circle cx="990.0" cy="440.6" r="5.4" stroke="#2f8f3a"/><circle cx="1146.6" cy="669.0" r="5.4" stroke="#46be46"/><circle cx="903.0" cy="740.1" r="5.4" stroke="#38b838"/><circle cx="1019.6" cy="613.7" r="5.4" stroke="#38b838"/><circle cx="949.2" cy="454.0" r="5.4" stroke="#2f8f3a"/><circle cx="831.5" cy="639.4" r="5.4" stroke="#40c840"/><circle cx="1090.7" cy="467.0" r="5.4" stroke="#5ae05a"/><circle cx="1065.9" cy="525.1" r="5.4" stroke="#3a9a3a"/><circle cx="824.4" cy="467.8" r="5.4" stroke="#3a9a3a"/><circle cx="942.7" cy="544.8" r="5.4" stroke="#50dc50"/><circle cx="1080.5" cy="405.1" r="5.4" stroke="#46be46"/><circle cx="1108.6" cy="466.5" r="5.4" stroke="#46be46"/><circle cx="972.6" cy="653.7" r="5.4" stroke="#40c840"/><circle cx="1018.8" cy="552.8" r="5.4" stroke="#2f8f3a"/><circle cx="854.7" cy="517.4" r="5.4" stroke="#2f8f3a"/><circle cx="937.2" cy="642.7" r="5.4" stroke="#50dc50"/><circle cx="1159.7" cy="470.8" r="5.4" stroke="#2f8f3a"/><circle cx="939.4" cy="604.6" r="5.4" stroke="#38b838"/><circle cx="1008.3" cy="756.3" r="5.4" stroke="#2f8f3a"/><circle cx="1200.9" cy="570.1" r="5.4" stroke="#4ad64a"/><circle cx="870.3" cy="641.7" r="5.4" stroke="#2f8f3a"/><circle cx="1066.6" cy="632.6" r="5.4" stroke="#38b838"/><circle cx="966.1" cy="514.9" r="5.4" stroke="#50dc50"/><circle cx="997.6" cy="445.5" r="5.4" stroke="#50dc50"/><circle cx="1254.3" cy="443.7" r="5.4" stroke="#3a9a3a"/><circle cx="947.8" cy="758.4" r="5.4" stroke="#38b838"/><circle cx="1258.5" cy="717.3" r="5.4" stroke="#3a9a3a"/><circle cx="1067.5" cy="597.7" r="5.4" stroke="#4ad64a"/><circle cx="1196.4" cy="704.4" r="5.4" stroke="#5ae05a"/><circle cx="904.3" cy="704.1" r="5.4" stroke="#40c840"/><circle cx="1180.0" cy="552.4" r="5.4" stroke="#50dc50"/><circle cx="963.3" cy="672.5" r="5.4" stroke="#2f8f3a"/><circle cx="1228.4" cy="697.4" r="5.4" stroke="#40c840"/><circle cx="994.9" cy="749.8" r="5.4" stroke="#38b838"/><circle cx="830.6" cy="604.0" r="5.4" stroke="#4ad64a"/><circle cx="1247.8" cy="601.7" r="5.4" stroke="#46be46"/><circle cx="1053.0" cy="646.8" r="5.4" stroke="#46be46"/><circle cx="1159.0" cy="741.4" r="5.4" stroke="#5ae05a"/><circle cx="1185.7" cy="626.8" r="5.4" stroke="#3a9a3a"/><circle cx="1103.8" cy="556.7" r="5.4" stroke="#46be46"/><circle cx="1252.8" cy="526.7" r="5.4" stroke="#5ae05a"/><circle cx="1160.8" cy="614.4" r="5.4" stroke="#5ae05a"/><circle cx="917.5" cy="534.1" r="5.4" stroke="#3a9a3a"/><circle cx="1184.5" cy="612.7" r="5.4" stroke="#4ad64a"/><circle cx="1098.5" cy="765.8" r="5.4" stroke="#2f8f3a"/><circle cx="945.3" cy="445.5" r="5.4" stroke="#40c840"/><circle cx="1227.0" cy="765.6" r="5.4" stroke="#50dc50"/><circle cx="969.1" cy="472.2" r="5.4" stroke="#2f8f3a"/><circle cx="1160.4" cy="655.3" r="5.4" stroke="#40c840"/><circle cx="1071.5" cy="748.5" r="5.4" stroke="#50dc50"/><circle cx="1144.6" cy="442.2" r="5.4" stroke="#5ae05a"/><circle cx="1047.4" cy="446.1" r="5.4" stroke="#50dc50"/><circle cx="1094.0" cy="490.9" r="5.4" stroke="#4ad64a"/><circle cx="867.0" cy="477.4" r="5.4" stroke="#2f8f3a"/><circle cx="964.2" cy="692.5" r="5.4" stroke="#2f8f3a"/><circle cx="878.4" cy="747.5" r="5.4" stroke="#4ad64a"/><circle cx="1191.5" cy="699.7" r="5.4" stroke="#4ad64a"/><circle cx="875.6" cy="648.8" r="5.4" stroke="#46be46"/><circle cx="982.3" cy="703.8" r="5.4" stroke="#4ad64a"/><circle cx="952.2" cy="428.6" r="5.4" stroke="#4ad64a"/><circle cx="986.1" cy="479.5" r="5.4" stroke="#38b838"/><circle cx="803.4" cy="655.0" r="5.4" stroke="#50dc50"/><circle cx="852.5" cy="471.4" r="5.4" stroke="#40c840"/><circle cx="881.8" cy="518.4" r="5.4" stroke="#2f8f3a"/><circle cx="1188.7" cy="641.7" r="5.4" stroke="#2f8f3a"/><circle cx="1151.1" cy="722.1" r="5.4" stroke="#38b838"/><circle cx="1237.1" cy="568.7" r="5.4" stroke="#38b838"/><circle cx="1015.8" cy="767.8" r="5.4" stroke="#46be46"/><circle cx="949.0" cy="554.3" r="5.4" stroke="#4ad64a"/><circle cx="1018.1" cy="765.0" r="5.4" stroke="#50dc50"/><circle cx="1194.4" cy="605.9" r="5.4" stroke="#40c840"/><circle cx="936.9" cy="651.1" r="5.4" stroke="#40c840"/><circle cx="1157.7" cy="428.8" r="5.4" stroke="#40c840"/><circle cx="998.1" cy="638.9" r="5.4" stroke="#3a9a3a"/><circle cx="952.7" cy="454.1" r="5.4" stroke="#5ae05a"/><circle cx="978.2" cy="482.2" r="5.4" stroke="#38b838"/><circle cx="1061.0" cy="685.1" r="5.4" stroke="#40c840"/><circle cx="1118.0" cy="484.7" r="5.4" stroke="#5ae05a"/><circle cx="1211.6" cy="425.0" r="5.4" stroke="#2f8f3a"/><circle cx="843.9" cy="686.1" r="5.4" stroke="#4ad64a"/><circle cx="877.2" cy="757.5" r="5.4" stroke="#2f8f3a"/><circle cx="1144.2" cy="566.0" r="5.4" stroke="#4ad64a"/><circle cx="820.7" cy="509.9" r="5.4" stroke="#50dc50"/><circle cx="841.8" cy="663.0" r="5.4" stroke="#50dc50"/><circle cx="979.0" cy="603.7" r="5.4" stroke="#4ad64a"/><circle cx="1180.6" cy="408.9" r="5.4" stroke="#2f8f3a"/><circle cx="899.9" cy="758.0" r="5.4" stroke="#5ae05a"/><circle cx="1045.3" cy="733.8" r="5.4" stroke="#2f8f3a"/><circle cx="1086.2" cy="622.6" r="5.4" stroke="#50dc50"/><circle cx="977.8" cy="481.7" r="5.4" stroke="#50dc50"/><circle cx="1161.3" cy="762.7" r="5.4" stroke="#3a9a3a"/><circle cx="1195.2" cy="749.0" r="5.4" stroke="#40c840"/><circle cx="918.2" cy="679.8" r="5.4" stroke="#5ae05a"/><circle cx="1152.5" cy="706.3" r="5.4" stroke="#50dc50"/><circle cx="994.0" cy="637.2" r="5.4" stroke="#4ad64a"/><circle cx="1265.3" cy="445.3" r="5.4" stroke="#4ad64a"/><circle cx="1215.6" cy="493.1" r="5.4" stroke="#4ad64a"/><circle cx="956.5" cy="473.2" r="5.4" stroke="#38b838"/><circle cx="991.2" cy="698.7" r="5.4" stroke="#3a9a3a"/><circle cx="1251.6" cy="590.3" r="5.4" stroke="#4ad64a"/><circle cx="1003.6" cy="623.3" r="5.4" stroke="#38b838"/><circle cx="1080.6" cy="406.2" r="5.4" stroke="#4ad64a"/><circle cx="1202.2" cy="554.6" r="5.4" stroke="#40c840"/><circle cx="955.9" cy="626.4" r="5.4" stroke="#38b838"/><circle cx="1030.6" cy="512.9" r="5.4" stroke="#50dc50"/><circle cx="932.6" cy="513.6" r="5.4" stroke="#46be46"/><circle cx="1006.9" cy="394.7" r="5.4" stroke="#46be46"/><circle cx="1233.7" cy="452.5" r="5.4" stroke="#2f8f3a"/><circle cx="989.1" cy="481.2" r="5.4" stroke="#3a9a3a"/><circle cx="856.1" cy="389.8" r="5.4" stroke="#38b838"/><circle cx="1261.0" cy="421.2" r="5.4" stroke="#46be46"/><circle cx="1053.0" cy="720.6" r="5.4" stroke="#2f8f3a"/><circle cx="1002.6" cy="617.3" r="5.4" stroke="#38b838"/><circle cx="795.1" cy="689.8" r="5.4" stroke="#5ae05a"/><circle cx="826.0" cy="437.6" r="5.4" stroke="#50dc50"/><circle cx="1005.1" cy="432.6" r="5.4" stroke="#2f8f3a"/><circle cx="1110.9" cy="594.5" r="5.4" stroke="#3a9a3a"/><circle cx="1215.8" cy="608.9" r="5.4" stroke="#46be46"/><circle cx="863.5" cy="751.1" r="5.4" stroke="#46be46"/><circle cx="1248.9" cy="592.5" r="5.4" stroke="#4ad64a"/><circle cx="1254.7" cy="396.3" r="5.4" stroke="#4ad64a"/><circle cx="999.9" cy="696.6" r="5.4" stroke="#3a9a3a"/><circle cx="1243.2" cy="463.3" r="5.4" stroke="#50dc50"/><circle cx="1087.9" cy="513.2" r="5.4" stroke="#3a9a3a"/><circle cx="1227.9" cy="623.3" r="5.4" stroke="#4ad64a"/><circle cx="969.9" cy="600.6" r="5.4" stroke="#3a9a3a"/><circle cx="905.6" cy="750.2" r="5.4" stroke="#50dc50"/><circle cx="1112.8" cy="487.7" r="5.4" stroke="#40c840"/><circle cx="934.7" cy="445.5" r="5.4" stroke="#50dc50"/><circle cx="1049.2" cy="388.5" r="5.4" stroke="#50dc50"/><circle cx="1017.1" cy="625.1" r="5.4" stroke="#3a9a3a"/><circle cx="907.4" cy="566.7" r="5.4" stroke="#46be46"/><circle cx="1219.8" cy="437.3" r="5.4" stroke="#38b838"/><circle cx="1066.8" cy="453.2" r="5.4" stroke="#50dc50"/><circle cx="1018.3" cy="533.9" r="5.4" stroke="#50dc50"/><circle cx="925.5" cy="399.6" r="5.4" stroke="#38b838"/><circle cx="990.8" cy="438.2" r="5.4" stroke="#40c840"/><circle cx="988.0" cy="618.5" r="5.4" stroke="#4ad64a"/><circle cx="1103.3" cy="503.8" r="5.4" stroke="#50dc50"/><circle cx="1173.7" cy="633.7" r="5.4" stroke="#4ad64a"/><circle cx="793.6" cy="552.1" r="5.4" stroke="#3a9a3a"/><circle cx="1061.0" cy="570.3" r="5.4" stroke="#3a9a3a"/><circle cx="1051.5" cy="643.8" r="5.4" stroke="#40c840"/><circle cx="1169.1" cy="758.6" r="5.4" stroke="#38b838"/><circle cx="943.8" cy="699.8" r="5.4" stroke="#3a9a3a"/><circle cx="1120.8" cy="481.9" r="5.4" stroke="#46be46"/><circle cx="827.5" cy="743.7" r="5.4" stroke="#4ad64a"/><circle cx="1236.2" cy="455.6" r="5.4" stroke="#38b838"/><circle cx="1024.0" cy="732.1" r="5.4" stroke="#40c840"/><circle cx="1169.3" cy="704.2" r="5.4" stroke="#4ad64a"/><circle cx="1263.1" cy="701.9" r="5.4" stroke="#40c840"/><circle cx="1065.6" cy="729.5" r="5.4" stroke="#40c840"/><circle cx="1064.2" cy="511.5" r="5.4" stroke="#2f8f3a"/><circle cx="1110.5" cy="513.7" r="5.4" stroke="#3a9a3a"/><circle cx="1111.4" cy="661.1" r="5.4" stroke="#40c840"/><circle cx="1124.3" cy="438.6" r="5.4" stroke="#50dc50"/><circle cx="1085.1" cy="537.1" r="5.4" stroke="#46be46"/><circle cx="1009.2" cy="767.9" r="5.4" stroke="#4ad64a"/><circle cx="1129.7" cy="420.9" r="5.4" stroke="#3a9a3a"/><circle cx="1067.5" cy="568.4" r="5.4" stroke="#5ae05a"/><circle cx="965.6" cy="474.0" r="5.4" stroke="#3a9a3a"/><circle cx="807.3" cy="743.6" r="5.4" stroke="#38b838"/><circle cx="1246.2" cy="584.1" r="5.4" stroke="#50dc50"/><circle cx="1229.2" cy="539.1" r="5.4" stroke="#4ad64a"/><circle cx="1171.3" cy="401.3" r="5.4" stroke="#3a9a3a"/><circle cx="858.1" cy="532.4" r="5.4" stroke="#46be46"/><circle cx="1105.9" cy="550.6" r="5.4" stroke="#40c840"/><circle cx="968.5" cy="494.9" r="5.4" stroke="#2f8f3a"/><circle cx="985.3" cy="482.0" r="5.4" stroke="#40c840"/><circle cx="1243.1" cy="565.5" r="5.4" stroke="#40c840"/><circle cx="953.9" cy="530.3" r="5.4" stroke="#46be46"/><circle cx="813.0" cy="668.2" r="5.4" stroke="#3a9a3a"/><circle cx="1142.9" cy="408.3" r="5.4" stroke="#50dc50"/><circle cx="1231.0" cy="468.4" r="5.4" stroke="#50dc50"/><circle cx="1164.4" cy="728.2" r="5.4" stroke="#3a9a3a"/><circle cx="875.3" cy="656.5" r="5.4" stroke="#5ae05a"/><circle cx="1121.7" cy="619.8" r="5.4" stroke="#3a9a3a"/><circle cx="963.1" cy="594.9" r="5.4" stroke="#40c840"/><circle cx="1098.7" cy="618.2" r="5.4" stroke="#38b838"/><circle cx="1157.8" cy="580.0" r="5.4" stroke="#38b838"/><circle cx="805.7" cy="450.4" r="5.4" stroke="#38b838"/><circle cx="867.4" cy="613.7" r="5.4" stroke="#50dc50"/><circle cx="1112.4" cy="651.7" r="5.4" stroke="#4ad64a"/><circle cx="1118.1" cy="423.5" r="5.4" stroke="#2f8f3a"/><circle cx="1123.0" cy="557.0" r="5.4" stroke="#5ae05a"/><circle cx="1081.8" cy="390.8" r="5.4" stroke="#50dc50"/><circle cx="854.2" cy="564.8" r="5.4" stroke="#40c840"/><circle cx="829.7" cy="530.9" r="5.4" stroke="#50dc50"/><circle cx="1045.2" cy="635.5" r="5.4" stroke="#5ae05a"/><circle cx="862.8" cy="502.2" r="5.4" stroke="#3a9a3a"/><circle cx="1079.7" cy="394.0" r="5.4" stroke="#2f8f3a"/><circle cx="936.0" cy="597.2" r="5.4" stroke="#5ae05a"/><circle cx="907.7" cy="591.7" r="5.4" stroke="#46be46"/><circle cx="1071.6" cy="702.9" r="5.4" stroke="#4ad64a"/><circle cx="992.1" cy="748.0" r="5.4" stroke="#5ae05a"/><circle cx="815.0" cy="634.6" r="5.4" stroke="#4ad64a"/><circle cx="982.5" cy="446.8" r="5.4" stroke="#46be46"/><circle cx="1055.4" cy="667.1" r="5.4" stroke="#50dc50"/><circle cx="984.7" cy="477.3" r="5.4" stroke="#4ad64a"/><circle cx="1250.8" cy="594.1" r="5.4" stroke="#46be46"/><circle cx="1219.3" cy="595.7" r="5.4" stroke="#5ae05a"/><circle cx="1227.3" cy="600.6" r="5.4" stroke="#40c840"/><circle cx="813.9" cy="628.1" r="5.4" stroke="#4ad64a"/><circle cx="828.1" cy="736.7" r="5.4" stroke="#4ad64a"/><circle cx="1118.1" cy="413.8" r="5.4" stroke="#38b838"/><circle cx="806.8" cy="493.3" r="5.4" stroke="#40c840"/><circle cx="1052.0" cy="464.2" r="5.4" stroke="#40c840"/><circle cx="991.3" cy="762.4" r="5.4" stroke="#50dc50"/><circle cx="861.9" cy="453.0" r="5.4" stroke="#46be46"/><circle cx="952.5" cy="577.9" r="5.4" stroke="#3a9a3a"/><circle cx="1098.9" cy="459.9" r="5.4" stroke="#5ae05a"/><circle cx="1075.8" cy="595.3" r="5.4" stroke="#38b838"/><circle cx="1205.3" cy="664.2" r="5.4" stroke="#50dc50"/><circle cx="1248.2" cy="760.6" r="5.4" stroke="#5ae05a"/><circle cx="1158.9" cy="644.0" r="5.4" stroke="#4ad64a"/><circle cx="906.9" cy="679.6" r="5.4" stroke="#4ad64a"/><circle cx="1227.6" cy="642.5" r="5.4" stroke="#50dc50"/><circle cx="794.7" cy="528.2" r="5.4" stroke="#46be46"/><circle cx="1222.1" cy="582.0" r="5.4" stroke="#40c840"/><circle cx="966.1" cy="597.2" r="5.4" stroke="#2f8f3a"/><circle cx="1198.4" cy="505.0" r="5.4" stroke="#50dc50"/><circle cx="844.0" cy="565.5" r="5.4" stroke="#46be46"/><circle cx="1053.1" cy="736.7" r="5.4" stroke="#40c840"/><circle cx="1155.2" cy="704.2" r="5.4" stroke="#50dc50"/><circle cx="1054.9" cy="660.8" r="5.4" stroke="#4ad64a"/><circle cx="956.5" cy="572.4" r="5.4" stroke="#5ae05a"/><circle cx="1267.3" cy="575.2" r="5.4" stroke="#5ae05a"/><circle cx="1066.1" cy="622.2" r="5.4" stroke="#4ad64a"/><circle cx="954.6" cy="524.8" r="5.4" stroke="#38b838"/><circle cx="1192.9" cy="679.2" r="5.4" stroke="#3a9a3a"/><circle cx="1263.6" cy="714.7" r="5.4" stroke="#3a9a3a"/><circle cx="1087.3" cy="534.8" r="5.4" stroke="#2f8f3a"/><circle cx="1219.9" cy="669.0" r="5.4" stroke="#2f8f3a"/><circle cx="827.0" cy="410.9" r="5.4" stroke="#5ae05a"/><circle cx="1202.5" cy="429.9" r="5.4" stroke="#46be46"/><circle cx="953.1" cy="581.7" r="5.4" stroke="#50dc50"/><circle cx="1253.7" cy="446.5" r="5.4" stroke="#5ae05a"/><circle cx="859.5" cy="688.2" r="5.4" stroke="#2f8f3a"/><circle cx="1133.0" cy="701.8" r="5.4" stroke="#2f8f3a"/><circle cx="994.6" cy="546.0" r="5.4" stroke="#38b838"/><circle cx="1067.9" cy="617.1" r="5.4" stroke="#4ad64a"/><circle cx="940.7" cy="431.2" r="5.4" stroke="#40c840"/><circle cx="1197.9" cy="768.3" r="5.4" stroke="#2f8f3a"/><circle cx="1019.6" cy="726.4" r="5.4" stroke="#46be46"/><circle cx="842.6" cy="568.2" r="5.4" stroke="#5ae05a"/><circle cx="901.5" cy="702.5" r="5.4" stroke="#40c840"/><circle cx="945.1" cy="408.3" r="5.4" stroke="#50dc50"/><circle cx="896.7" cy="405.3" r="5.4" stroke="#3a9a3a"/><circle cx="979.9" cy="467.6" r="5.4" stroke="#40c840"/><circle cx="1186.9" cy="636.9" r="5.4" stroke="#4ad64a"/><circle cx="1254.2" cy="754.6" r="5.4" stroke="#2f8f3a"/><circle cx="1218.1" cy="623.9" r="5.4" stroke="#2f8f3a"/><circle cx="803.7" cy="486.9" r="5.4" stroke="#4ad64a"/><circle cx="1179.5" cy="618.0" r="5.4" stroke="#5ae05a"/><circle cx="909.4" cy="396.7" r="5.4" stroke="#2f8f3a"/><circle cx="1049.4" cy="396.1" r="5.4" stroke="#3a9a3a"/><circle cx="825.7" cy="598.0" r="5.4" stroke="#5ae05a"/><circle cx="959.2" cy="443.4" r="5.4" stroke="#46be46"/><circle cx="1000.2" cy="398.0" r="5.4" stroke="#40c840"/><circle cx="1207.3" cy="448.5" r="5.4" stroke="#50dc50"/><circle cx="1096.8" cy="649.4" r="5.4" stroke="#3a9a3a"/><circle cx="1057.3" cy="556.6" r="5.4" stroke="#2f8f3a"/><circle cx="950.4" cy="480.1" r="5.4" stroke="#3a9a3a"/><circle cx="989.1" cy="645.6" r="5.4" stroke="#3a9a3a"/><circle cx="814.2" cy="447.9" r="5.4" stroke="#50dc50"/><circle cx="1028.8" cy="456.2" r="5.4" stroke="#38b838"/><circle cx="1257.3" cy="671.5" r="5.4" stroke="#40c840"/><circle cx="946.1" cy="448.4" r="5.4" stroke="#50dc50"/><circle cx="884.0" cy="673.3" r="5.4" stroke="#50dc50"/><circle cx="1241.3" cy="423.2" r="5.4" stroke="#50dc50"/><circle cx="1125.8" cy="651.6" r="5.4" stroke="#5ae05a"/><circle cx="961.4" cy="547.8" r="5.4" stroke="#46be46"/><circle cx="1257.7" cy="765.9" r="5.4" stroke="#40c840"/><circle cx="996.3" cy="490.1" r="5.4" stroke="#50dc50"/><circle cx="944.2" cy="411.8" r="5.4" stroke="#5ae05a"/><circle cx="841.5" cy="598.3" r="5.4" stroke="#3a9a3a"/><circle cx="1155.9" cy="456.1" r="5.4" stroke="#50dc50"/><circle cx="1177.9" cy="573.1" r="5.4" stroke="#3a9a3a"/><circle cx="989.6" cy="531.1" r="5.4" stroke="#2f8f3a"/><circle cx="1027.7" cy="453.0" r="5.4" stroke="#38b838"/><circle cx="963.7" cy="396.9" r="5.4" stroke="#50dc50"/><circle cx="796.2" cy="657.9" r="5.4" stroke="#3a9a3a"/><circle cx="931.0" cy="661.3" r="5.4" stroke="#40c840"/><circle cx="979.6" cy="539.7" r="5.4" stroke="#50dc50"/><circle cx="1106.5" cy="528.3" r="5.4" stroke="#50dc50"/><circle cx="1062.3" cy="571.3" r="5.4" stroke="#38b838"/><circle cx="924.7" cy="545.8" r="5.4" stroke="#3a9a3a"/><circle cx="824.0" cy="642.7" r="5.4" stroke="#46be46"/><circle cx="944.3" cy="459.1" r="5.4" stroke="#3a9a3a"/><circle cx="929.7" cy="762.1" r="5.4" stroke="#2f8f3a"/><circle cx="993.2" cy="760.4" r="5.4" stroke="#50dc50"/><circle cx="964.9" cy="633.3" r="5.4" stroke="#40c840"/><circle cx="958.2" cy="414.5" r="5.4" stroke="#3a9a3a"/><circle cx="942.8" cy="748.1" r="5.4" stroke="#40c840"/><circle cx="1215.4" cy="507.9" r="5.4" stroke="#40c840"/><circle cx="941.6" cy="555.8" r="5.4" stroke="#46be46"/><circle cx="982.7" cy="521.2" r="5.4" stroke="#50dc50"/><circle cx="1232.6" cy="707.7" r="5.4" stroke="#3a9a3a"/><circle cx="862.2" cy="741.1" r="5.4" stroke="#46be46"/><circle cx="1213.1" cy="469.3" r="5.4" stroke="#3a9a3a"/><circle cx="936.0" cy="751.5" r="5.4" stroke="#50dc50"/><circle cx="1017.0" cy="411.1" r="5.4" stroke="#2f8f3a"/><circle cx="1027.7" cy="439.3" r="5.4" stroke="#4ad64a"/><circle cx="1094.5" cy="540.0" r="5.4" stroke="#40c840"/><circle cx="1211.2" cy="657.6" r="5.4" stroke="#40c840"/><circle cx="1093.3" cy="549.7" r="5.4" stroke="#4ad64a"/><circle cx="1157.5" cy="723.4" r="5.4" stroke="#4ad64a"/><circle cx="1265.3" cy="483.2" r="5.4" stroke="#50dc50"/><circle cx="929.7" cy="548.6" r="5.4" stroke="#4ad64a"/><circle cx="901.3" cy="701.2" r="5.4" stroke="#46be46"/><circle cx="1108.1" cy="469.2" r="5.4" stroke="#4ad64a"/><circle cx="1220.3" cy="755.2" r="5.4" stroke="#2f8f3a"/><circle cx="970.0" cy="645.4" r="5.4" stroke="#50dc50"/><circle cx="1052.3" cy="754.8" r="5.4" stroke="#2f8f3a"/><circle cx="1014.4" cy="435.0" r="5.4" stroke="#40c840"/><circle cx="914.7" cy="596.5" r="5.4" stroke="#38b838"/><circle cx="837.5" cy="767.0" r="5.4" stroke="#4ad64a"/><circle cx="1096.2" cy="539.6" r="5.4" stroke="#46be46"/><circle cx="905.8" cy="389.7" r="5.4" stroke="#4ad64a"/><circle cx="1175.6" cy="424.6" r="5.4" stroke="#4ad64a"/><circle cx="1017.6" cy="568.6" r="5.4" stroke="#3a9a3a"/><circle cx="1111.9" cy="685.7" r="5.4" stroke="#3a9a3a"/><circle cx="1118.1" cy="489.7" r="5.4" stroke="#4ad64a"/><circle cx="1000.8" cy="691.2" r="5.4" stroke="#50dc50"/><circle cx="1212.8" cy="702.3" r="5.4" stroke="#5ae05a"/><circle cx="1027.9" cy="686.3" r="5.4" stroke="#46be46"/><circle cx="825.0" cy="536.5" r="5.4" stroke="#2f8f3a"/><circle cx="799.4" cy="391.9" r="5.4" stroke="#2f8f3a"/><circle cx="1120.1" cy="609.8" r="5.4" stroke="#40c840"/><circle cx="849.4" cy="686.7" r="5.4" stroke="#46be46"/><circle cx="1154.2" cy="464.7" r="5.4" stroke="#3a9a3a"/><circle cx="1032.7" cy="446.5" r="5.4" stroke="#40c840"/><circle cx="1097.2" cy="569.0" r="5.4" stroke="#50dc50"/><circle cx="948.2" cy="570.1" r="5.4" stroke="#2f8f3a"/><circle cx="1177.4" cy="764.6" r="5.4" stroke="#4ad64a"/><circle cx="1248.0" cy="534.9" r="5.4" stroke="#38b838"/><circle cx="897.4" cy="762.9" r="5.4" stroke="#5ae05a"/><circle cx="1193.6" cy="666.5" r="5.4" stroke="#5ae05a"/><circle cx="1001.6" cy="684.8" r="5.4" stroke="#38b838"/><circle cx="1081.5" cy="488.5" r="5.4" stroke="#50dc50"/><circle cx="1098.9" cy="752.6" r="5.4" stroke="#2f8f3a"/><circle cx="826.2" cy="464.0" r="5.4" stroke="#2f8f3a"/><circle cx="850.3" cy="691.5" r="5.4" stroke="#46be46"/><circle cx="1171.7" cy="639.1" r="5.4" stroke="#2f8f3a"/><circle cx="1121.4" cy="641.7" r="5.4" stroke="#5ae05a"/><circle cx="1100.8" cy="736.5" r="5.4" stroke="#5ae05a"/><circle cx="863.9" cy="460.1" r="5.4" stroke="#4ad64a"/><circle cx="807.3" cy="539.1" r="5.4" stroke="#2f8f3a"/><circle cx="1098.7" cy="624.3" r="5.4" stroke="#4ad64a"/><circle cx="957.3" cy="576.0" r="5.4" stroke="#5ae05a"/><circle cx="1072.1" cy="606.4" r="5.4" stroke="#50dc50"/><circle cx="947.4" cy="413.9" r="5.4" stroke="#5ae05a"/><circle cx="948.6" cy="551.4" r="5.4" stroke="#50dc50"/><circle cx="823.8" cy="475.2" r="5.4" stroke="#5ae05a"/><circle cx="987.5" cy="570.9" r="5.4" stroke="#46be46"/><circle cx="1173.3" cy="600.7" r="5.4" stroke="#50dc50"/><circle cx="1046.1" cy="412.1" r="5.4" stroke="#3a9a3a"/><circle cx="929.6" cy="541.6" r="5.4" stroke="#40c840"/><circle cx="1133.4" cy="588.0" r="5.4" stroke="#38b838"/><circle cx="810.4" cy="484.7" r="5.4" stroke="#5ae05a"/><circle cx="921.4" cy="426.5" r="5.4" stroke="#38b838"/><circle cx="938.3" cy="685.8" r="5.4" stroke="#2f8f3a"/><circle cx="979.3" cy="409.9" r="5.4" stroke="#50dc50"/><circle cx="1021.1" cy="473.5" r="5.4" stroke="#46be46"/><circle cx="857.5" cy="616.0" r="5.4" stroke="#46be46"/><circle cx="1022.5" cy="426.5" r="5.4" stroke="#4ad64a"/><circle cx="1207.2" cy="734.6" r="5.4" stroke="#5ae05a"/><circle cx="990.6" cy="401.3" r="5.4" stroke="#40c840"/><circle cx="1077.9" cy="398.6" r="5.4" stroke="#40c840"/><circle cx="1051.5" cy="666.8" r="5.4" stroke="#38b838"/><circle cx="1122.0" cy="417.0" r="5.4" stroke="#50dc50"/><circle cx="1000.7" cy="463.4" r="5.4" stroke="#38b838"/><circle cx="1127.8" cy="395.9" r="5.4" stroke="#46be46"/><circle cx="1071.6" cy="604.3" r="5.4" stroke="#50dc50"/><circle cx="1140.7" cy="610.4" r="5.4" stroke="#2f8f3a"/><circle cx="1076.4" cy="525.4" r="5.4" stroke="#50dc50"/><circle cx="831.8" cy="510.6" r="5.4" stroke="#4ad64a"/><circle cx="1089.1" cy="554.5" r="5.4" stroke="#46be46"/><circle cx="840.0" cy="430.7" r="5.4" stroke="#46be46"/><circle cx="997.7" cy="572.2" r="5.4" stroke="#3a9a3a"/><circle cx="1194.3" cy="621.4" r="5.4" stroke="#40c840"/><circle cx="893.9" cy="629.2" r="5.4" stroke="#38b838"/><circle cx="1138.0" cy="387.9" r="5.4" stroke="#5ae05a"/><circle cx="907.6" cy="675.6" r="5.4" stroke="#2f8f3a"/><circle cx="1042.4" cy="479.5" r="5.4" stroke="#38b838"/><circle cx="1132.3" cy="744.0" r="5.4" stroke="#4ad64a"/><circle cx="1146.7" cy="577.6" r="5.4" stroke="#46be46"/><circle cx="975.8" cy="399.1" r="5.4" stroke="#2f8f3a"/><circle cx="928.1" cy="557.1" r="5.4" stroke="#40c840"/><circle cx="1068.1" cy="639.4" r="5.4" stroke="#40c840"/><circle cx="1228.9" cy="706.4" r="5.4" stroke="#4ad64a"/><circle cx="915.1" cy="607.8" r="5.4" stroke="#3a9a3a"/><circle cx="951.7" cy="459.3" r="5.4" stroke="#3a9a3a"/><circle cx="874.0" cy="649.6" r="5.4" stroke="#3a9a3a"/><circle cx="985.6" cy="552.0" r="5.4" stroke="#4ad64a"/><circle cx="1169.8" cy="427.3" r="5.4" stroke="#40c840"/><circle cx="1043.9" cy="643.7" r="5.4" stroke="#5ae05a"/><circle cx="1152.5" cy="475.2" r="5.4" stroke="#4ad64a"/><circle cx="893.0" cy="626.1" r="5.4" stroke="#50dc50"/><circle cx="1190.0" cy="576.6" r="5.4" stroke="#4ad64a"/><circle cx="1240.7" cy="581.7" r="5.4" stroke="#50dc50"/><circle cx="1127.5" cy="415.8" r="5.4" stroke="#2f8f3a"/><circle cx="924.1" cy="476.9" r="5.4" stroke="#40c840"/><circle cx="1047.8" cy="565.4" r="5.4" stroke="#38b838"/><circle cx="824.5" cy="582.8" r="5.4" stroke="#46be46"/><circle cx="1039.1" cy="715.3" r="5.4" stroke="#50dc50"/><circle cx="905.8" cy="629.1" r="5.4" stroke="#3a9a3a"/><circle cx="1173.1" cy="593.5" r="5.4" stroke="#50dc50"/><circle cx="1163.4" cy="519.5" r="5.4" stroke="#4ad64a"/><circle cx="1027.9" cy="562.4" r="5.4" stroke="#40c840"/><circle cx="839.0" cy="603.7" r="5.4" stroke="#38b838"/><circle cx="925.1" cy="536.0" r="5.4" stroke="#3a9a3a"/><circle cx="824.3" cy="519.2" r="5.4" stroke="#4ad64a"/><circle cx="1038.9" cy="531.1" r="5.4" stroke="#5ae05a"/><circle cx="807.7" cy="418.5" r="5.4" stroke="#38b838"/><circle cx="795.4" cy="716.8" r="5.4" stroke="#50dc50"/><circle cx="934.0" cy="700.6" r="5.4" stroke="#40c840"/><circle cx="832.1" cy="537.9" r="5.4" stroke="#2f8f3a"/><circle cx="1106.8" cy="683.6" r="5.4" stroke="#5ae05a"/><circle cx="970.6" cy="584.0" r="5.4" stroke="#50dc50"/><circle cx="849.0" cy="685.2" r="5.4" stroke="#4ad64a"/><circle cx="1100.7" cy="476.8" r="5.4" stroke="#5ae05a"/><circle cx="1234.9" cy="469.1" r="5.4" stroke="#46be46"/><circle cx="980.2" cy="570.9" r="5.4" stroke="#5ae05a"/><circle cx="997.4" cy="456.5" r="5.4" stroke="#2f8f3a"/><circle cx="1107.4" cy="565.2" r="5.4" stroke="#38b838"/><circle cx="820.0" cy="451.0" r="5.4" stroke="#46be46"/><circle cx="1182.8" cy="686.5" r="5.4" stroke="#46be46"/><circle cx="949.5" cy="430.9" r="5.4" stroke="#38b838"/><circle cx="1148.1" cy="409.2" r="5.4" stroke="#4ad64a"/><circle cx="1244.7" cy="629.1" r="5.4" stroke="#38b838"/><circle cx="1255.2" cy="454.1" r="5.4" stroke="#5ae05a"/><circle cx="1014.7" cy="763.8" r="5.4" stroke="#3a9a3a"/><circle cx="1261.7" cy="571.0" r="5.4" stroke="#50dc50"/><circle cx="882.8" cy="533.7" r="5.4" stroke="#4ad64a"/><circle cx="1223.9" cy="518.1" r="5.4" stroke="#38b838"/><circle cx="984.8" cy="696.2" r="5.4" stroke="#50dc50"/><circle cx="859.8" cy="480.7" r="5.4" stroke="#5ae05a"/><circle cx="1185.7" cy="493.1" r="5.4" stroke="#2f8f3a"/><circle cx="948.3" cy="463.1" r="5.4" stroke="#5ae05a"/><circle cx="1259.7" cy="703.7" r="5.4" stroke="#4ad64a"/><circle cx="1132.9" cy="732.9" r="5.4" stroke="#5ae05a"/><circle cx="1041.9" cy="490.6" r="5.4" stroke="#50dc50"/><circle cx="1193.8" cy="467.8" r="5.4" stroke="#4ad64a"/><circle cx="933.2" cy="602.2" r="5.4" stroke="#38b838"/><circle cx="858.5" cy="404.9" r="5.4" stroke="#5ae05a"/><circle cx="829.2" cy="432.7" r="5.4" stroke="#38b838"/><circle cx="1067.8" cy="603.3" r="5.4" stroke="#50dc50"/><circle cx="997.1" cy="407.1" r="5.4" stroke="#3a9a3a"/><circle cx="1230.6" cy="606.8" r="5.4" stroke="#38b838"/><circle cx="969.5" cy="547.2" r="5.4" stroke="#38b838"/><circle cx="1245.2" cy="604.7" r="5.4" stroke="#38b838"/><circle cx="845.7" cy="560.0" r="5.4" stroke="#3a9a3a"/><circle cx="1180.9" cy="661.9" r="5.4" stroke="#4ad64a"/><circle cx="1178.8" cy="443.7" r="5.4" stroke="#40c840"/><circle cx="986.0" cy="475.5" r="5.4" stroke="#50dc50"/><circle cx="949.4" cy="568.5" r="5.4" stroke="#40c840"/><circle cx="1006.6" cy="436.0" r="5.4" stroke="#38b838"/><circle cx="847.3" cy="648.6" r="5.4" stroke="#4ad64a"/><circle cx="1056.3" cy="397.6" r="5.4" stroke="#40c840"/><circle cx="1100.4" cy="395.5" r="5.4" stroke="#40c840"/><circle cx="1229.3" cy="442.0" r="5.4" stroke="#38b838"/><circle cx="1017.8" cy="732.0" r="5.4" stroke="#5ae05a"/><circle cx="943.2" cy="510.6" r="5.4" stroke="#38b838"/><circle cx="990.0" cy="441.8" r="5.4" stroke="#5ae05a"/><circle cx="820.2" cy="555.0" r="5.4" stroke="#2f8f3a"/><circle cx="1232.5" cy="674.2" r="5.4" stroke="#5ae05a"/><circle cx="956.6" cy="445.5" r="5.4" stroke="#4ad64a"/><circle cx="1082.3" cy="557.9" r="5.4" stroke="#2f8f3a"/><circle cx="1119.8" cy="735.3" r="5.4" stroke="#50dc50"/><circle cx="1076.0" cy="645.1" r="5.4" stroke="#5ae05a"/><circle cx="1249.2" cy="717.5" r="5.4" stroke="#2f8f3a"/><circle cx="874.5" cy="574.3" r="5.4" stroke="#3a9a3a"/><circle cx="1189.3" cy="461.0" r="5.4" stroke="#46be46"/><circle cx="852.1" cy="529.9" r="5.4" stroke="#50dc50"/><circle cx="885.7" cy="625.3" r="5.4" stroke="#46be46"/><circle cx="1192.6" cy="617.6" r="5.4" stroke="#46be46"/><circle cx="881.4" cy="653.7" r="5.4" stroke="#46be46"/><circle cx="1225.0" cy="762.9" r="5.4" stroke="#4ad64a"/><circle cx="886.8" cy="701.8" r="5.4" stroke="#5ae05a"/><circle cx="1018.9" cy="445.6" r="5.4" stroke="#4ad64a"/><circle cx="921.3" cy="705.4" r="5.4" stroke="#5ae05a"/><circle cx="959.1" cy="450.3" r="5.4" stroke="#50dc50"/><circle cx="1190.1" cy="662.0" r="5.4" stroke="#40c840"/><circle cx="932.6" cy="438.4" r="5.4" stroke="#3a9a3a"/><circle cx="1032.2" cy="490.8" r="5.4" stroke="#4ad64a"/><circle cx="1152.5" cy="719.5" r="5.4" stroke="#2f8f3a"/><circle cx="1064.3" cy="616.3" r="5.4" stroke="#40c840"/><circle cx="1259.4" cy="447.3" r="5.4" stroke="#40c840"/><circle cx="1046.9" cy="508.2" r="5.4" stroke="#2f8f3a"/><circle cx="1221.1" cy="609.7" r="5.4" stroke="#2f8f3a"/><circle cx="1227.6" cy="533.6" r="5.4" stroke="#4ad64a"/><circle cx="896.7" cy="616.3" r="5.4" stroke="#2f8f3a"/><circle cx="1005.4" cy="540.6" r="5.4" stroke="#2f8f3a"/><circle cx="1208.7" cy="760.9" r="5.4" stroke="#38b838"/><circle cx="969.2" cy="489.4" r="5.4" stroke="#38b838"/><circle cx="1214.8" cy="595.1" r="5.4" stroke="#4ad64a"/><circle cx="1109.1" cy="488.3" r="5.4" stroke="#4ad64a"/><circle cx="901.5" cy="492.9" r="5.4" stroke="#38b838"/><circle cx="978.0" cy="469.6" r="5.4" stroke="#2f8f3a"/><circle cx="1025.7" cy="552.2" r="5.4" stroke="#40c840"/><circle cx="859.1" cy="473.3" r="5.4" stroke="#40c840"/><circle cx="1167.4" cy="640.9" r="5.4" stroke="#2f8f3a"/><circle cx="947.7" cy="403.7" r="5.4" stroke="#50dc50"/><circle cx="891.6" cy="680.3" r="5.4" stroke="#50dc50"/><circle cx="936.0" cy="762.3" r="5.4" stroke="#4ad64a"/><circle cx="1228.1" cy="666.0" r="5.4" stroke="#3a9a3a"/><circle cx="931.8" cy="522.1" r="5.4" stroke="#2f8f3a"/><circle cx="988.0" cy="551.6" r="5.4" stroke="#5ae05a"/><circle cx="946.8" cy="602.3" r="5.4" stroke="#4ad64a"/><circle cx="1122.6" cy="652.5" r="5.4" stroke="#40c840"/><circle cx="999.7" cy="419.8" r="5.4" stroke="#2f8f3a"/><circle cx="1118.6" cy="490.1" r="5.4" stroke="#4ad64a"/><circle cx="984.4" cy="638.6" r="5.4" stroke="#3a9a3a"/><circle cx="1140.9" cy="566.7" r="5.4" stroke="#40c840"/><circle cx="1248.3" cy="464.5" r="5.4" stroke="#46be46"/><circle cx="868.2" cy="613.7" r="5.4" stroke="#38b838"/><circle cx="988.1" cy="707.3" r="5.4" stroke="#2f8f3a"/><circle cx="1207.3" cy="657.2" r="5.4" stroke="#4ad64a"/><circle cx="822.5" cy="404.4" r="5.4" stroke="#4ad64a"/><circle cx="1016.5" cy="588.1" r="5.4" stroke="#40c840"/><circle cx="923.9" cy="602.1" r="5.4" stroke="#3a9a3a"/><circle cx="914.0" cy="499.6" r="5.4" stroke="#38b838"/><circle cx="981.7" cy="760.6" r="5.4" stroke="#2f8f3a"/><circle cx="1240.7" cy="601.7" r="5.4" stroke="#5ae05a"/><circle cx="1117.6" cy="464.9" r="5.4" stroke="#4ad64a"/><circle cx="1180.7" cy="570.6" r="5.4" stroke="#2f8f3a"/><circle cx="1183.4" cy="671.7" r="5.4" stroke="#3a9a3a"/><circle cx="900.4" cy="397.4" r="5.4" stroke="#3a9a3a"/><circle cx="1139.3" cy="666.3" r="5.4" stroke="#46be46"/><circle cx="1111.4" cy="717.7" r="5.4" stroke="#3a9a3a"/><circle cx="1202.9" cy="433.9" r="5.4" stroke="#46be46"/><circle cx="899.3" cy="630.8" r="5.4" stroke="#5ae05a"/><circle cx="932.1" cy="729.3" r="5.4" stroke="#38b838"/><circle cx="990.3" cy="734.9" r="5.4" stroke="#3a9a3a"/><circle cx="1247.0" cy="559.4" r="5.4" stroke="#4ad64a"/><circle cx="1156.7" cy="593.7" r="5.4" stroke="#46be46"/><circle cx="1255.9" cy="595.4" r="5.4" stroke="#38b838"/><circle cx="1220.0" cy="467.1" r="5.4" stroke="#38b838"/><circle cx="1218.4" cy="750.2" r="5.4" stroke="#38b838"/><circle cx="1019.4" cy="475.7" r="5.4" stroke="#40c840"/><circle cx="907.8" cy="755.6" r="5.4" stroke="#46be46"/><circle cx="1211.8" cy="617.5" r="5.4" stroke="#38b838"/><circle cx="1192.8" cy="578.9" r="5.4" stroke="#38b838"/><circle cx="1253.3" cy="450.7" r="5.4" stroke="#5ae05a"/><circle cx="924.1" cy="473.0" r="5.4" stroke="#50dc50"/><circle cx="1146.8" cy="426.2" r="5.4" stroke="#2f8f3a"/><circle cx="1057.9" cy="682.4" r="5.4" stroke="#5ae05a"/><circle cx="1194.8" cy="711.7" r="5.4" stroke="#4ad64a"/><circle cx="1013.6" cy="714.5" r="5.4" stroke="#46be46"/><circle cx="1100.9" cy="705.5" r="5.4" stroke="#50dc50"/><circle cx="1253.6" cy="653.0" r="5.4" stroke="#2f8f3a"/><circle cx="1032.3" cy="680.0" r="5.4" stroke="#4ad64a"/><circle cx="1123.1" cy="544.1" r="5.4" stroke="#3a9a3a"/><circle cx="1031.5" cy="542.7" r="5.4" stroke="#38b838"/><circle cx="980.7" cy="760.5" r="5.4" stroke="#40c840"/><circle cx="883.1" cy="627.7" r="5.4" stroke="#4ad64a"/><circle cx="1184.6" cy="615.2" r="5.4" stroke="#40c840"/><circle cx="926.6" cy="488.1" r="5.4" stroke="#2f8f3a"/><circle cx="1047.3" cy="539.5" r="5.4" stroke="#5ae05a"/><circle cx="1079.9" cy="601.9" r="5.4" stroke="#2f8f3a"/><circle cx="882.0" cy="749.0" r="5.4" stroke="#50dc50"/><circle cx="1153.7" cy="526.3" r="5.4" stroke="#38b838"/><circle cx="971.3" cy="396.4" r="5.4" stroke="#40c840"/><circle cx="1089.7" cy="560.7" r="5.4" stroke="#2f8f3a"/><circle cx="965.1" cy="499.4" r="5.4" stroke="#50dc50"/><circle cx="844.5" cy="493.1" r="5.4" stroke="#3a9a3a"/><circle cx="823.2" cy="576.3" r="5.4" stroke="#4ad64a"/><circle cx="1230.6" cy="694.4" r="5.4" stroke="#5ae05a"/><circle cx="1129.3" cy="758.0" r="5.4" stroke="#4ad64a"/><circle cx="1124.7" cy="681.9" r="5.4" stroke="#50dc50"/><circle cx="1177.8" cy="462.6" r="5.4" stroke="#3a9a3a"/><circle cx="907.7" cy="421.5" r="5.4" stroke="#5ae05a"/><circle cx="983.7" cy="476.9" r="5.4" stroke="#5ae05a"/><circle cx="1253.7" cy="486.9" r="5.4" stroke="#4ad64a"/><circle cx="794.0" cy="732.6" r="5.4" stroke="#3a9a3a"/><circle cx="1115.4" cy="497.6" r="5.4" stroke="#38b838"/><circle cx="1150.4" cy="441.7" r="5.4" stroke="#4ad64a"/><circle cx="1130.9" cy="734.5" r="5.4" stroke="#2f8f3a"/><circle cx="1230.5" cy="592.8" r="5.4" stroke="#40c840"/><circle cx="1211.4" cy="501.9" r="5.4" stroke="#38b838"/><circle cx="1231.3" cy="667.8" r="5.4" stroke="#40c840"/><circle cx="1262.7" cy="761.9" r="5.4" stroke="#2f8f3a"/><circle cx="1185.3" cy="639.9" r="5.4" stroke="#40c840"/><circle cx="1073.9" cy="626.9" r="5.4" stroke="#4ad64a"/><circle cx="1064.8" cy="614.9" r="5.4" stroke="#3a9a3a"/><circle cx="952.5" cy="583.0" r="5.4" stroke="#38b838"/><circle cx="857.3" cy="576.9" r="5.4" stroke="#38b838"/><circle cx="832.5" cy="603.5" r="5.4" stroke="#4ad64a"/><circle cx="1030.9" cy="446.9" r="5.4" stroke="#2f8f3a"/><circle cx="862.7" cy="535.2" r="5.4" stroke="#40c840"/><circle cx="1021.3" cy="612.6" r="5.4" stroke="#5ae05a"/><circle cx="918.7" cy="418.2" r="5.4" stroke="#50dc50"/><circle cx="927.2" cy="438.5" r="5.4" stroke="#50dc50"/><circle cx="1125.6" cy="716.0" r="5.4" stroke="#38b838"/><circle cx="1207.2" cy="567.9" r="5.4" stroke="#4ad64a"/><circle cx="1232.3" cy="624.2" r="5.4" stroke="#38b838"/><circle cx="889.3" cy="584.8" r="5.4" stroke="#4ad64a"/><circle cx="878.1" cy="739.6" r="5.4" stroke="#3a9a3a"/><circle cx="972.9" cy="411.1" r="5.4" stroke="#40c840"/><circle cx="949.9" cy="581.7" r="5.4" stroke="#50dc50"/><circle cx="1217.9" cy="620.2" r="5.4" stroke="#50dc50"/><circle cx="950.7" cy="678.0" r="5.4" stroke="#2f8f3a"/><circle cx="993.0" cy="648.5" r="5.4" stroke="#3a9a3a"/><circle cx="1073.4" cy="408.7" r="5.4" stroke="#4ad64a"/><circle cx="1059.9" cy="578.2" r="5.4" stroke="#4ad64a"/><circle cx="931.7" cy="624.3" r="5.4" stroke="#50dc50"/><circle cx="812.9" cy="744.6" r="5.4" stroke="#46be46"/><circle cx="844.3" cy="408.7" r="5.4" stroke="#38b838"/><circle cx="866.1" cy="572.9" r="5.4" stroke="#46be46"/><circle cx="991.9" cy="740.6" r="5.4" stroke="#5ae05a"/><circle cx="903.2" cy="615.0" r="5.4" stroke="#50dc50"/><circle cx="1081.9" cy="597.5" r="5.4" stroke="#5ae05a"/><circle cx="849.5" cy="674.6" r="5.4" stroke="#40c840"/><circle cx="1095.4" cy="634.2" r="5.4" stroke="#40c840"/><circle cx="1123.5" cy="562.8" r="5.4" stroke="#5ae05a"/><circle cx="1091.7" cy="480.7" r="5.4" stroke="#40c840"/><circle cx="1261.4" cy="613.0" r="5.4" stroke="#5ae05a"/><circle cx="1219.5" cy="546.1" r="5.4" stroke="#2f8f3a"/><circle cx="940.8" cy="575.9" r="5.4" stroke="#5ae05a"/><circle cx="950.8" cy="411.8" r="5.4" stroke="#38b838"/><circle cx="1077.6" cy="626.2" r="5.4" stroke="#5ae05a"/><circle cx="1253.5" cy="669.5" r="5.4" stroke="#3a9a3a"/><circle cx="796.2" cy="574.9" r="5.4" stroke="#46be46"/><circle cx="878.7" cy="531.0" r="5.4" stroke="#46be46"/><circle cx="1027.5" cy="579.9" r="5.4" stroke="#4ad64a"/><circle cx="1120.2" cy="759.3" r="5.4" stroke="#46be46"/><circle cx="801.1" cy="530.5" r="5.4" stroke="#46be46"/><circle cx="1222.2" cy="639.8" r="5.4" stroke="#2f8f3a"/><circle cx="1104.7" cy="483.4" r="5.4" stroke="#40c840"/><circle cx="1149.7" cy="410.2" r="5.4" stroke="#40c840"/><circle cx="1095.1" cy="538.4" r="5.4" stroke="#2f8f3a"/><circle cx="978.3" cy="526.2" r="5.4" stroke="#3a9a3a"/><circle cx="931.2" cy="474.9" r="5.4" stroke="#5ae05a"/><circle cx="1253.9" cy="450.6" r="5.4" stroke="#50dc50"/><circle cx="961.6" cy="575.2" r="5.4" stroke="#40c840"/><circle cx="941.6" cy="448.4" r="5.4" stroke="#40c840"/><circle cx="1198.4" cy="578.8" r="5.4" stroke="#50dc50"/><circle cx="1064.9" cy="612.5" r="5.4" stroke="#38b838"/><circle cx="1216.3" cy="446.3" r="5.4" stroke="#38b838"/><circle cx="859.1" cy="414.5" r="5.4" stroke="#4ad64a"/><circle cx="1012.4" cy="736.4" r="5.4" stroke="#46be46"/><circle cx="825.0" cy="623.9" r="5.4" stroke="#40c840"/><circle cx="912.4" cy="643.7" r="5.4" stroke="#50dc50"/><circle cx="905.6" cy="661.1" r="5.4" stroke="#40c840"/><circle cx="1217.3" cy="451.4" r="5.4" stroke="#38b838"/><circle cx="1158.0" cy="484.7" r="5.4" stroke="#38b838"/><circle cx="1038.9" cy="740.7" r="5.4" stroke="#5ae05a"/><circle cx="929.3" cy="628.8" r="5.4" stroke="#50dc50"/><circle cx="969.7" cy="542.2" r="5.4" stroke="#4ad64a"/><circle cx="1047.1" cy="688.9" r="5.4" stroke="#40c840"/><circle cx="1057.4" cy="709.3" r="5.4" stroke="#5ae05a"/><circle cx="1055.2" cy="469.3" r="5.4" stroke="#38b838"/><circle cx="1216.7" cy="534.4" r="5.4" stroke="#5ae05a"/><circle cx="1094.9" cy="479.3" r="5.4" stroke="#2f8f3a"/><circle cx="925.4" cy="543.9" r="5.4" stroke="#40c840"/><circle cx="1174.5" cy="630.5" r="5.4" stroke="#40c840"/><circle cx="1108.0" cy="624.8" r="5.4" stroke="#2f8f3a"/><circle cx="861.4" cy="405.8" r="5.4" stroke="#3a9a3a"/><circle cx="979.2" cy="463.3" r="5.4" stroke="#3a9a3a"/><circle cx="1072.4" cy="542.5" r="5.4" stroke="#2f8f3a"/><circle cx="1045.4" cy="524.6" r="5.4" stroke="#4ad64a"/><circle cx="818.8" cy="528.1" r="5.4" stroke="#4ad64a"/><circle cx="1131.1" cy="580.8" r="5.4" stroke="#40c840"/><circle cx="960.2" cy="527.9" r="5.4" stroke="#50dc50"/><circle cx="789.7" cy="673.7" r="5.4" stroke="#2f8f3a"/><circle cx="1135.9" cy="730.0" r="5.4" stroke="#2f8f3a"/><circle cx="1120.6" cy="578.7" r="5.4" stroke="#4ad64a"/><circle cx="1110.1" cy="452.0" r="5.4" stroke="#40c840"/><circle cx="992.6" cy="639.4" r="5.4" stroke="#3a9a3a"/><circle cx="1227.4" cy="445.6" r="5.4" stroke="#46be46"/><circle cx="1086.8" cy="395.5" r="5.4" stroke="#5ae05a"/><circle cx="1233.4" cy="729.7" r="5.4" stroke="#50dc50"/><circle cx="1081.4" cy="714.0" r="5.4" stroke="#38b838"/><circle cx="1197.5" cy="663.4" r="5.4" stroke="#2f8f3a"/><circle cx="1247.4" cy="489.4" r="5.4" stroke="#5ae05a"/><circle cx="1081.6" cy="442.2" r="5.4" stroke="#50dc50"/><circle cx="1265.4" cy="646.1" r="5.4" stroke="#2f8f3a"/><circle cx="1263.3" cy="696.9" r="5.4" stroke="#2f8f3a"/><circle cx="1041.8" cy="561.5" r="5.4" stroke="#38b838"/><circle cx="1214.9" cy="652.8" r="5.4" stroke="#38b838"/><circle cx="1010.8" cy="590.9" r="5.4" stroke="#2f8f3a"/><circle cx="1114.2" cy="483.0" r="5.4" stroke="#46be46"/><circle cx="1158.3" cy="752.9" r="5.4" stroke="#50dc50"/><circle cx="947.7" cy="578.1" r="5.4" stroke="#3a9a3a"/><circle cx="789.9" cy="663.8" r="5.4" stroke="#38b838"/><circle cx="1127.5" cy="555.5" r="5.4" stroke="#3a9a3a"/><circle cx="904.8" cy="666.4" r="5.4" stroke="#2f8f3a"/><circle cx="816.9" cy="619.8" r="5.4" stroke="#38b838"/><circle cx="1092.8" cy="603.5" r="5.4" stroke="#46be46"/><circle cx="972.1" cy="732.8" r="5.4" stroke="#38b838"/><circle cx="1193.4" cy="547.3" r="5.4" stroke="#5ae05a"/><circle cx="876.4" cy="653.9" r="5.4" stroke="#5ae05a"/><circle cx="792.5" cy="472.4" r="5.4" stroke="#3a9a3a"/><circle cx="1146.4" cy="520.2" r="5.4" stroke="#5ae05a"/><circle cx="1247.7" cy="514.2" r="5.4" stroke="#40c840"/><circle cx="1136.8" cy="551.6" r="5.4" stroke="#3a9a3a"/><circle cx="1178.2" cy="555.6" r="5.4" stroke="#40c840"/><circle cx="1092.1" cy="495.8" r="5.4" stroke="#5ae05a"/><circle cx="1166.8" cy="761.9" r="5.4" stroke="#38b838"/><circle cx="822.2" cy="701.5" r="5.4" stroke="#46be46"/><circle cx="1125.2" cy="393.2" r="5.4" stroke="#46be46"/><circle cx="1018.6" cy="462.6" r="5.4" stroke="#5ae05a"/><circle cx="920.9" cy="718.9" r="5.4" stroke="#38b838"/><circle cx="846.9" cy="605.9" r="5.4" stroke="#38b838"/><circle cx="1155.6" cy="557.8" r="5.4" stroke="#46be46"/><circle cx="816.3" cy="621.8" r="5.4" stroke="#3a9a3a"/><circle cx="932.0" cy="479.8" r="5.4" stroke="#2f8f3a"/><circle cx="1224.1" cy="487.0" r="5.4" stroke="#5ae05a"/><circle cx="1201.0" cy="443.4" r="5.4" stroke="#38b838"/><circle cx="1194.8" cy="657.2" r="5.4" stroke="#50dc50"/><circle cx="934.0" cy="525.2" r="5.4" stroke="#40c840"/><circle cx="1098.5" cy="541.8" r="5.4" stroke="#4ad64a"/><circle cx="901.1" cy="600.0" r="5.4" stroke="#2f8f3a"/><circle cx="952.3" cy="560.3" r="5.4" stroke="#38b838"/><circle cx="928.4" cy="549.2" r="5.4" stroke="#38b838"/><circle cx="964.1" cy="628.5" r="5.4" stroke="#40c840"/><circle cx="1223.4" cy="732.8" r="5.4" stroke="#3a9a3a"/><circle cx="1109.0" cy="695.5" r="5.4" stroke="#3a9a3a"/><circle cx="794.2" cy="592.6" r="5.4" stroke="#4ad64a"/><circle cx="903.1" cy="752.6" r="5.4" stroke="#4ad64a"/><circle cx="933.0" cy="542.8" r="5.4" stroke="#2f8f3a"/><circle cx="1001.7" cy="507.1" r="5.4" stroke="#2f8f3a"/><circle cx="1135.4" cy="450.8" r="5.4" stroke="#46be46"/><circle cx="1003.8" cy="483.7" r="5.4" stroke="#2f8f3a"/><circle cx="808.2" cy="494.5" r="5.4" stroke="#3a9a3a"/><circle cx="974.6" cy="490.3" r="5.4" stroke="#4ad64a"/><circle cx="807.8" cy="570.7" r="5.4" stroke="#4ad64a"/><circle cx="1015.0" cy="402.2" r="5.4" stroke="#50dc50"/><circle cx="1050.3" cy="437.7" r="5.4" stroke="#50dc50"/><circle cx="1060.7" cy="675.9" r="5.4" stroke="#4ad64a"/><circle cx="1006.6" cy="507.4" r="5.4" stroke="#4ad64a"/><circle cx="968.7" cy="399.2" r="5.4" stroke="#38b838"/><circle cx="1108.9" cy="505.5" r="5.4" stroke="#50dc50"/><circle cx="1096.4" cy="475.7" r="5.4" stroke="#3a9a3a"/><circle cx="836.6" cy="544.2" r="5.4" stroke="#40c840"/><circle cx="1015.7" cy="613.5" r="5.4" stroke="#50dc50"/><circle cx="1197.3" cy="658.3" r="5.4" stroke="#38b838"/><circle cx="1178.0" cy="434.5" r="5.4" stroke="#2f8f3a"/><circle cx="1205.1" cy="619.6" r="5.4" stroke="#2f8f3a"/><circle cx="1010.5" cy="515.3" r="5.4" stroke="#46be46"/><circle cx="1168.1" cy="738.6" r="5.4" stroke="#50dc50"/><circle cx="1030.4" cy="550.6" r="5.4" stroke="#2f8f3a"/><circle cx="816.4" cy="510.4" r="5.4" stroke="#38b838"/><circle cx="937.4" cy="481.8" r="5.4" stroke="#38b838"/><circle cx="926.5" cy="760.6" r="5.4" stroke="#46be46"/><circle cx="1222.6" cy="439.4" r="5.4" stroke="#5ae05a"/><circle cx="1150.3" cy="633.6" r="5.4" stroke="#4ad64a"/><circle cx="937.5" cy="526.6" r="5.4" stroke="#38b838"/><circle cx="1138.4" cy="574.1" r="5.4" stroke="#4ad64a"/><circle cx="1068.1" cy="634.9" r="5.4" stroke="#2f8f3a"/><circle cx="995.5" cy="433.6" r="5.4" stroke="#38b838"/><circle cx="1023.2" cy="459.4" r="5.4" stroke="#38b838"/><circle cx="1028.7" cy="677.0" r="5.4" stroke="#2f8f3a"/><circle cx="1225.4" cy="599.8" r="5.4" stroke="#50dc50"/><circle cx="982.0" cy="569.0" r="5.4" stroke="#3a9a3a"/><circle cx="1190.7" cy="699.8" r="5.4" stroke="#3a9a3a"/><circle cx="846.9" cy="439.2" r="5.4" stroke="#38b838"/><circle cx="1148.8" cy="560.7" r="5.4" stroke="#50dc50"/><circle cx="969.6" cy="424.5" r="5.4" stroke="#4ad64a"/><circle cx="811.4" cy="575.2" r="5.4" stroke="#40c840"/><circle cx="845.4" cy="566.8" r="5.4" stroke="#50dc50"/><circle cx="1007.1" cy="532.2" r="5.4" stroke="#5ae05a"/><circle cx="1065.5" cy="496.8" r="5.4" stroke="#50dc50"/><circle cx="1129.9" cy="531.9" r="5.4" stroke="#3a9a3a"/><circle cx="992.0" cy="574.3" r="5.4" stroke="#46be46"/><circle cx="1268.0" cy="595.3" r="5.4" stroke="#40c840"/><circle cx="1017.1" cy="505.6" r="5.4" stroke="#2f8f3a"/><circle cx="832.2" cy="664.9" r="5.4" stroke="#3a9a3a"/><circle cx="1093.8" cy="491.1" r="5.4" stroke="#40c840"/><circle cx="952.4" cy="475.1" r="5.4" stroke="#4ad64a"/><circle cx="1085.4" cy="470.2" r="5.4" stroke="#4ad64a"/><circle cx="916.9" cy="723.5" r="5.4" stroke="#2f8f3a"/><circle cx="1126.9" cy="728.9" r="5.4" stroke="#5ae05a"/><circle cx="959.9" cy="631.2" r="5.4" stroke="#2f8f3a"/><circle cx="811.8" cy="533.9" r="5.4" stroke="#50dc50"/><circle cx="1232.9" cy="764.0" r="5.4" stroke="#2f8f3a"/><circle cx="1176.2" cy="599.8" r="5.4" stroke="#2f8f3a"/><circle cx="1092.0" cy="692.2" r="5.4" stroke="#50dc50"/><circle cx="1001.1" cy="502.8" r="5.4" stroke="#46be46"/><circle cx="1051.7" cy="691.4" r="5.4" stroke="#46be46"/><circle cx="1164.2" cy="470.6" r="5.4" stroke="#5ae05a"/><circle cx="878.1" cy="599.4" r="5.4" stroke="#4ad64a"/><circle cx="1052.8" cy="620.6" r="5.4" stroke="#5ae05a"/><circle cx="1195.4" cy="576.1" r="5.4" stroke="#4ad64a"/><circle cx="790.9" cy="553.0" r="5.4" stroke="#38b838"/><circle cx="955.5" cy="624.8" r="5.4" stroke="#4ad64a"/><circle cx="818.3" cy="687.4" r="5.4" stroke="#38b838"/><circle cx="1013.7" cy="700.8" r="5.4" stroke="#5ae05a"/><circle cx="1171.6" cy="597.8" r="5.4" stroke="#4ad64a"/><circle cx="899.7" cy="715.0" r="5.4" stroke="#50dc50"/><circle cx="808.3" cy="670.6" r="5.4" stroke="#38b838"/><circle cx="1041.7" cy="520.7" r="5.4" stroke="#50dc50"/><circle cx="1190.3" cy="469.1" r="5.4" stroke="#40c840"/><circle cx="1085.4" cy="577.7" r="5.4" stroke="#46be46"/><circle cx="1047.7" cy="581.5" r="5.4" stroke="#5ae05a"/><circle cx="1167.1" cy="524.8" r="5.4" stroke="#2f8f3a"/><circle cx="1251.6" cy="572.7" r="5.4" stroke="#4ad64a"/><circle cx="1166.3" cy="431.9" r="5.4" stroke="#38b838"/><circle cx="850.7" cy="676.2" r="5.4" stroke="#5ae05a"/><circle cx="929.5" cy="452.7" r="5.4" stroke="#50dc50"/><circle cx="1133.3" cy="585.3" r="5.4" stroke="#38b838"/><circle cx="997.3" cy="487.0" r="5.4" stroke="#5ae05a"/><circle cx="1176.0" cy="756.9" r="5.4" stroke="#5ae05a"/><circle cx="963.3" cy="446.0" r="5.4" stroke="#4ad64a"/><circle cx="916.7" cy="546.8" r="5.4" stroke="#50dc50"/><circle cx="1124.3" cy="579.9" r="5.4" stroke="#40c840"/><circle cx="1099.5" cy="584.6" r="5.4" stroke="#5ae05a"/><circle cx="894.1" cy="600.0" r="5.4" stroke="#46be46"/><circle cx="846.8" cy="629.8" r="5.4" stroke="#38b838"/><circle cx="993.3" cy="506.5" r="5.4" stroke="#38b838"/><circle cx="835.9" cy="718.9" r="5.4" stroke="#40c840"/><circle cx="1092.3" cy="472.5" r="5.4" stroke="#3a9a3a"/><circle cx="808.6" cy="634.7" r="5.4" stroke="#4ad64a"/><circle cx="1201.0" cy="610.2" r="5.4" stroke="#46be46"/><circle cx="837.8" cy="565.3" r="5.4" stroke="#5ae05a"/><circle cx="820.3" cy="513.8" r="5.4" stroke="#40c840"/><circle cx="1259.4" cy="443.2" r="5.4" stroke="#4ad64a"/><circle cx="1246.8" cy="656.5" r="5.4" stroke="#3a9a3a"/><circle cx="1157.2" cy="712.3" r="5.4" stroke="#3a9a3a"/><circle cx="1265.6" cy="461.3" r="5.4" stroke="#4ad64a"/><circle cx="1003.4" cy="443.8" r="5.4" stroke="#2f8f3a"/><circle cx="1041.7" cy="632.9" r="5.4" stroke="#50dc50"/><circle cx="1012.3" cy="626.2" r="5.4" stroke="#50dc50"/><circle cx="926.6" cy="648.3" r="5.4" stroke="#46be46"/><circle cx="1076.5" cy="615.7" r="5.4" stroke="#40c840"/><circle cx="1137.7" cy="584.7" r="5.4" stroke="#38b838"/><circle cx="1121.1" cy="547.7" r="5.4" stroke="#40c840"/><circle cx="1061.6" cy="753.4" r="5.4" stroke="#5ae05a"/><circle cx="1057.6" cy="457.3" r="5.4" stroke="#2f8f3a"/><circle cx="795.1" cy="746.3" r="5.4" stroke="#38b838"/><circle cx="1077.5" cy="754.4" r="5.4" stroke="#46be46"/><circle cx="929.7" cy="538.8" r="5.4" stroke="#3a9a3a"/><circle cx="1013.5" cy="534.5" r="5.4" stroke="#5ae05a"/><circle cx="1097.0" cy="510.6" r="5.4" stroke="#2f8f3a"/><circle cx="1026.4" cy="748.6" r="5.4" stroke="#46be46"/><circle cx="1129.2" cy="739.0" r="5.4" stroke="#40c840"/><circle cx="1192.3" cy="650.7" r="5.4" stroke="#46be46"/><circle cx="1220.9" cy="603.2" r="5.4" stroke="#40c840"/><circle cx="848.9" cy="604.0" r="5.4" stroke="#4ad64a"/><circle cx="1019.8" cy="398.6" r="5.4" stroke="#3a9a3a"/><circle cx="1003.2" cy="452.3" r="5.4" stroke="#40c840"/><circle cx="961.6" cy="566.6" r="5.4" stroke="#38b838"/><circle cx="1029.4" cy="519.4" r="5.4" stroke="#4ad64a"/><circle cx="1240.5" cy="573.9" r="5.4" stroke="#50dc50"/><circle cx="965.5" cy="476.9" r="5.4" stroke="#3a9a3a"/><circle cx="1255.1" cy="476.6" r="5.4" stroke="#4ad64a"/><circle cx="1152.7" cy="502.0" r="5.4" stroke="#2f8f3a"/><circle cx="1098.3" cy="445.9" r="5.4" stroke="#2f8f3a"/><circle cx="1262.3" cy="443.7" r="5.4" stroke="#38b838"/><circle cx="809.3" cy="532.8" r="5.4" stroke="#46be46"/><circle cx="1047.0" cy="570.4" r="5.4" stroke="#40c840"/><circle cx="1132.3" cy="511.9" r="5.4" stroke="#2f8f3a"/><circle cx="1015.0" cy="460.3" r="5.4" stroke="#38b838"/><circle cx="1176.4" cy="707.9" r="5.4" stroke="#3a9a3a"/><circle cx="1017.8" cy="553.0" r="5.4" stroke="#5ae05a"/><circle cx="1205.9" cy="439.2" r="5.4" stroke="#4ad64a"/><circle cx="880.5" cy="551.6" r="5.4" stroke="#4ad64a"/><circle cx="833.7" cy="481.6" r="5.4" stroke="#3a9a3a"/><circle cx="889.0" cy="470.0" r="5.4" stroke="#50dc50"/><circle cx="955.5" cy="725.6" r="5.4" stroke="#3a9a3a"/><circle cx="920.8" cy="512.4" r="5.4" stroke="#50dc50"/><circle cx="1186.6" cy="687.2" r="5.4" stroke="#4ad64a"/><circle cx="1010.9" cy="729.3" r="5.4" stroke="#2f8f3a"/><circle cx="1003.8" cy="656.0" r="5.4" stroke="#46be46"/><circle cx="927.5" cy="583.3" r="5.4" stroke="#50dc50"/><circle cx="1263.8" cy="717.7" r="5.4" stroke="#50dc50"/><circle cx="1133.2" cy="530.4" r="5.4" stroke="#38b838"/><circle cx="985.8" cy="487.9" r="5.4" stroke="#38b838"/><circle cx="1236.8" cy="482.2" r="5.4" stroke="#40c840"/><circle cx="1232.6" cy="545.8" r="5.4" stroke="#2f8f3a"/><circle cx="1052.9" cy="415.4" r="5.4" stroke="#3a9a3a"/><circle cx="973.1" cy="438.8" r="5.4" stroke="#4ad64a"/><circle cx="964.0" cy="393.8" r="5.4" stroke="#40c840"/><circle cx="1041.3" cy="452.9" r="5.4" stroke="#40c840"/><circle cx="850.3" cy="595.0" r="5.4" stroke="#5ae05a"/><circle cx="1202.1" cy="523.2" r="5.4" stroke="#38b838"/><circle cx="960.2" cy="534.4" r="5.4" stroke="#40c840"/><circle cx="912.3" cy="528.2" r="5.4" stroke="#46be46"/><circle cx="946.8" cy="719.1" r="5.4" stroke="#3a9a3a"/><circle cx="1226.1" cy="443.3" r="5.4" stroke="#4ad64a"/><circle cx="1142.3" cy="411.3" r="5.4" stroke="#46be46"/><circle cx="816.7" cy="481.5" r="5.4" stroke="#5ae05a"/><circle cx="1266.6" cy="606.4" r="5.4" stroke="#38b838"/><circle cx="930.3" cy="540.9" r="5.4" stroke="#2f8f3a"/><circle cx="921.2" cy="630.8" r="5.4" stroke="#40c840"/><circle cx="880.8" cy="435.6" r="5.4" stroke="#3a9a3a"/><circle cx="877.9" cy="524.5" r="5.4" stroke="#2f8f3a"/><circle cx="1240.2" cy="451.6" r="5.4" stroke="#4ad64a"/><circle cx="1235.4" cy="433.6" r="5.4" stroke="#40c840"/><circle cx="1089.1" cy="503.1" r="5.4" stroke="#46be46"/><circle cx="847.8" cy="436.4" r="5.4" stroke="#3a9a3a"/><circle cx="929.5" cy="478.3" r="5.4" stroke="#50dc50"/><circle cx="913.7" cy="625.3" r="5.4" stroke="#38b838"/><circle cx="953.6" cy="456.3" r="5.4" stroke="#3a9a3a"/><circle cx="875.2" cy="671.5" r="5.4" stroke="#2f8f3a"/><circle cx="792.7" cy="741.5" r="5.4" stroke="#40c840"/><circle cx="1120.3" cy="502.6" r="5.4" stroke="#40c840"/><circle cx="1180.2" cy="438.8" r="5.4" stroke="#46be46"/><circle cx="824.7" cy="460.8" r="5.4" stroke="#46be46"/><circle cx="1145.1" cy="578.3" r="5.4" stroke="#5ae05a"/><circle cx="999.3" cy="487.8" r="5.4" stroke="#4ad64a"/><circle cx="1228.2" cy="596.7" r="5.4" stroke="#3a9a3a"/><circle cx="813.3" cy="529.2" r="5.4" stroke="#5ae05a"/><circle cx="1143.7" cy="404.3" r="5.4" stroke="#4ad64a"/><circle cx="789.8" cy="414.3" r="5.4" stroke="#3a9a3a"/><circle cx="1105.5" cy="467.2" r="5.4" stroke="#38b838"/><circle cx="835.1" cy="607.7" r="5.4" stroke="#40c840"/><circle cx="995.4" cy="442.2" r="5.4" stroke="#38b838"/><circle cx="1041.6" cy="674.6" r="5.4" stroke="#4ad64a"/><circle cx="1263.8" cy="736.5" r="5.4" stroke="#2f8f3a"/><circle cx="1019.0" cy="670.9" r="5.4" stroke="#2f8f3a"/><circle cx="833.0" cy="403.2" r="5.4" stroke="#5ae05a"/><circle cx="1025.1" cy="580.9" r="5.4" stroke="#4ad64a"/></g>
<rect x="783.5" y="384.5" width="488.5" height="388.0" fill="none" stroke="#2a7a2a" stroke-width="1"/>
<circle cx="1206.6" cy="536.2" r="1.1" fill="#fff" opacity="0.9"/>
<circle cx="932.5" cy="420.1" r="1.1" fill="#fff" opacity="0.9"/>
<circle cx="1163.9" cy="709.3" r="1.1" fill="#fff" opacity="0.9"/>
<circle cx="821.4" cy="717.3" r="1.1" fill="#fff" opacity="0.9"/>
<circle cx="929.3" cy="436.2" r="1.1" fill="#fff" opacity="0.9"/>
<circle cx="928.8" cy="562.7" r="1.1" fill="#fff" opacity="0.9"/>
<circle cx="1012.7" cy="738.6" r="1.1" fill="#fff" opacity="0.9"/>
<circle cx="1129.6" cy="552.1" r="1.1" fill="#fff" opacity="0.9"/>
<circle cx="1022.4" cy="427.6" r="1.1" fill="#fff" opacity="0.9"/>
<circle cx="784.7" cy="741.6" r="1.1" fill="#fff" opacity="0.9"/>
<circle cx="931.0" cy="453.7" r="1.1" fill="#fff" opacity="0.9"/>
<circle cx="955.3" cy="631.1" r="1.1" fill="#fff" opacity="0.9"/>
<circle cx="912.5" cy="708.4" r="1.1" fill="#fff" opacity="0.9"/>
<circle cx="980.5" cy="679.8" r="1.1" fill="#fff" opacity="0.9"/>
<circle cx="796.4" cy="712.0" r="1.1" fill="#fff" opacity="0.9"/>
<circle cx="1075.3" cy="658.0" r="1.1" fill="#fff" opacity="0.9"/>
<circle cx="1044.2" cy="557.9" r="1.1" fill="#fff" opacity="0.9"/>
<circle cx="1025.7" cy="466.1" r="1.1" fill="#fff" opacity="0.9"/>
<circle cx="901.1" cy="702.3" r="1.1" fill="#fff" opacity="0.9"/>
<circle cx="1257.5" cy="625.2" r="1.1" fill="#fff" opacity="0.9"/>
<circle cx="1129.2" cy="742.2" r="1.1" fill="#fff" opacity="0.9"/>
<circle cx="1252.6" cy="638.4" r="1.1" fill="#fff" opacity="0.9"/>
<circle cx="1256.8" cy="492.1" r="1.1" fill="#fff" opacity="0.9"/>
<circle cx="1094.1" cy="647.5" r="1.1" fill="#fff" opacity="0.9"/>
<circle cx="1045.3" cy="650.9" r="1.1" fill="#fff" opacity="0.9"/>
<circle cx="1034.7" cy="759.8" r="1.1" fill="#fff" opacity="0.9"/>
<circle cx="1259.3" cy="594.8" r="1.1" fill="#fff" opacity="0.9"/>
<circle cx="1217.2" cy="518.8" r="1.1" fill="#fff" opacity="0.9"/>
<circle cx="1182.4" cy="446.3" r="1.1" fill="#fff" opacity="0.9"/>
<circle cx="1017.7" cy="538.4" r="1.1" fill="#fff" opacity="0.9"/>
<circle cx="1074.4" cy="464.5" r="1.1" fill="#fff" opacity="0.9"/>
<circle cx="1123.7" cy="662.6" r="1.1" fill="#fff" opacity="0.9"/>
<circle cx="1026.6" cy="471.6" r="1.1" fill="#fff" opacity="0.9"/>
<circle cx="1154.5" cy="703.2" r="1.1" fill="#fff" opacity="0.9"/>
<circle cx="1078.0" cy="743.5" r="1.1" fill="#fff" opacity="0.9"/>
<circle cx="825.0" cy="419.9" r="1.1" fill="#fff" opacity="0.9"/>
<circle cx="975.6" cy="695.5" r="1.1" fill="#fff" opacity="0.9"/>
<circle cx="936.6" cy="621.9" r="1.1" fill="#fff" opacity="0.9"/>
<circle cx="1079.5" cy="504.7" r="1.1" fill="#fff" opacity="0.9"/>
<circle cx="1037.0" cy="582.1" r="1.1" fill="#fff" opacity="0.9"/>
<svg x="1303" y="0" width="259" height="148.5" viewBox="1303 0 259 148.5" overflow="hidden">
<g filter="url(#camblur)">
<rect x="1290" y="-10" width="290" height="170" fill="url(#wall)"/>
<path d="M1511,-5 L1526,-5 L1535,155 L1521,155 Z" fill="#dde2dd"/>
<line x1="1511" y1="-5" x2="1521.5" y2="155" stroke="#b9beba" stroke-width="0.8"/>
<path d="M1526,-5 L1533,-5 L1542,155 L1535,155 Z" fill="#dfc699"/>
<path d="M1533,-5 L1570,-5 L1570,155 L1542,155 Z" fill="#eee8d0"/>
<path d="M1538,40 L1570,40 L1570,96 L1542,96 Z" fill="#f6f3ea"/>
<path d="M1541,88 L1570,88 L1570,120 L1544,120 Z" fill="#f7f5f0"/>
<rect x="1541" y="93" width="10" height="11" fill="#d02838" opacity="0.85"/>
<rect x="1551" y="110" width="10" height="4" fill="#8a8a8a"/>
<path d="M1543,112 L1570,112 L1570,136 L1545,136 Z" fill="#fafafa" opacity="0.7"/>
<path d="M1521,0 L1570,-2 L1570,14 L1528,12 Z" fill="#fafaf6"/>
<path d="M1489,53 L1516,51 L1520,56 L1520,83 L1493,85 L1489,81 Z" fill="#c41c22"/>
<rect x="1493" y="56" width="18" height="4" fill="#eee"/>
<rect x="1494" y="60" width="16" height="11" fill="#5a5c5a"/>
<rect x="1497" y="67" width="6" height="3" fill="#aab"/>
<rect x="1492" y="76" width="26" height="6" fill="#a81418"/>
<path d="M1432,149 Q1436,140 1446,136 L1460,140 L1478,140 Q1494,136 1500,142 L1504,149 Z" fill="#1d1f1d"/>
<path d="M1437,118 Q1434,132 1440,149" fill="none" stroke="#333" stroke-width="0.8"/>
<path d="M1440,96 Q1440,86 1463,86 Q1488,86 1488,100 L1489,126 Q1488,143 1474,147 L1454,147 Q1441,142 1440,126 Z" fill="#c7a596"/>
<ellipse cx="1464" cy="104" rx="14" ry="8" fill="#d1b2a5" opacity="0.7"/>
<path d="M1436,118 Q1432,90 1446,80 Q1462,72 1480,78 Q1493,86 1491,110 L1489,118 Q1488,100 1484,96 Q1472,88 1456,92 Q1445,95 1442,108 L1441,120 Z" fill="#2c2d2a"/>
<path d="M1443,115 Q1451,111 1460,113" fill="none" stroke="#33291f" stroke-width="3"/>
<path d="M1468,113 Q1477,111 1486,115" fill="none" stroke="#33291f" stroke-width="3"/>
<ellipse cx="1452" cy="121" rx="4" ry="2" fill="#4a4a7a" opacity="0.8"/>
<ellipse cx="1476" cy="121" rx="4" ry="2" fill="#4a4a7a" opacity="0.8"/>
<rect x="1442" y="117.5" width="4" height="4" fill="#2a2a2a"/>
<rect x="1441" y="117" width="21" height="14" rx="5" fill="#8a88c8" opacity="0.12"/>
<rect x="1467" y="117" width="21" height="14" rx="5" fill="#8a88c8" opacity="0.12"/>
<g fill="none" stroke="#5e2c2a" stroke-width="1.7"><rect x="1441" y="116" width="21" height="15" rx="5"/><rect x="1467" y="116" width="21" height="15" rx="5"/><path d="M1462,121 L1467,121"/></g>
<path d="M1461,126 Q1464,136 1468,134" fill="none" stroke="#a67e72" stroke-width="1.5"/>
<path d="M1453,139 Q1464,135 1475,139 L1476,149 L1452,149 Z" fill="#8a6a5a" opacity="0.55"/>
<path d="M1457,144 Q1464,141.5 1471,144 Q1464,147 1457,144 Z" fill="#7a4040"/>
<rect x="1303" y="0" width="259" height="1.2" fill="#e8ecea"/>
</g>
<rect x="1303" y="123" width="69" height="25.5" fill="#666666" opacity="0.95"/>
</svg>
<text x="1306.80" y="141.20" font-size="13" fill="#ffffff" stroke="#ffffff" stroke-width="0.6" textLength="61.50" lengthAdjust="spacingAndGlyphs" >MATTHIEU</text>
<rect x="1356" y="856" width="197" height="25" fill="#1b1718" rx="0" />
<text x="1365.60" y="874.10" font-size="16" fill="#f4f4f4" stroke="#f4f4f4" stroke-width="0.5" textLength="177.60" lengthAdjust="spacingAndGlyphs"  font-family="Liberation Mono">2025-12-05 21:51:17</text>
</svg>
</body></html>
